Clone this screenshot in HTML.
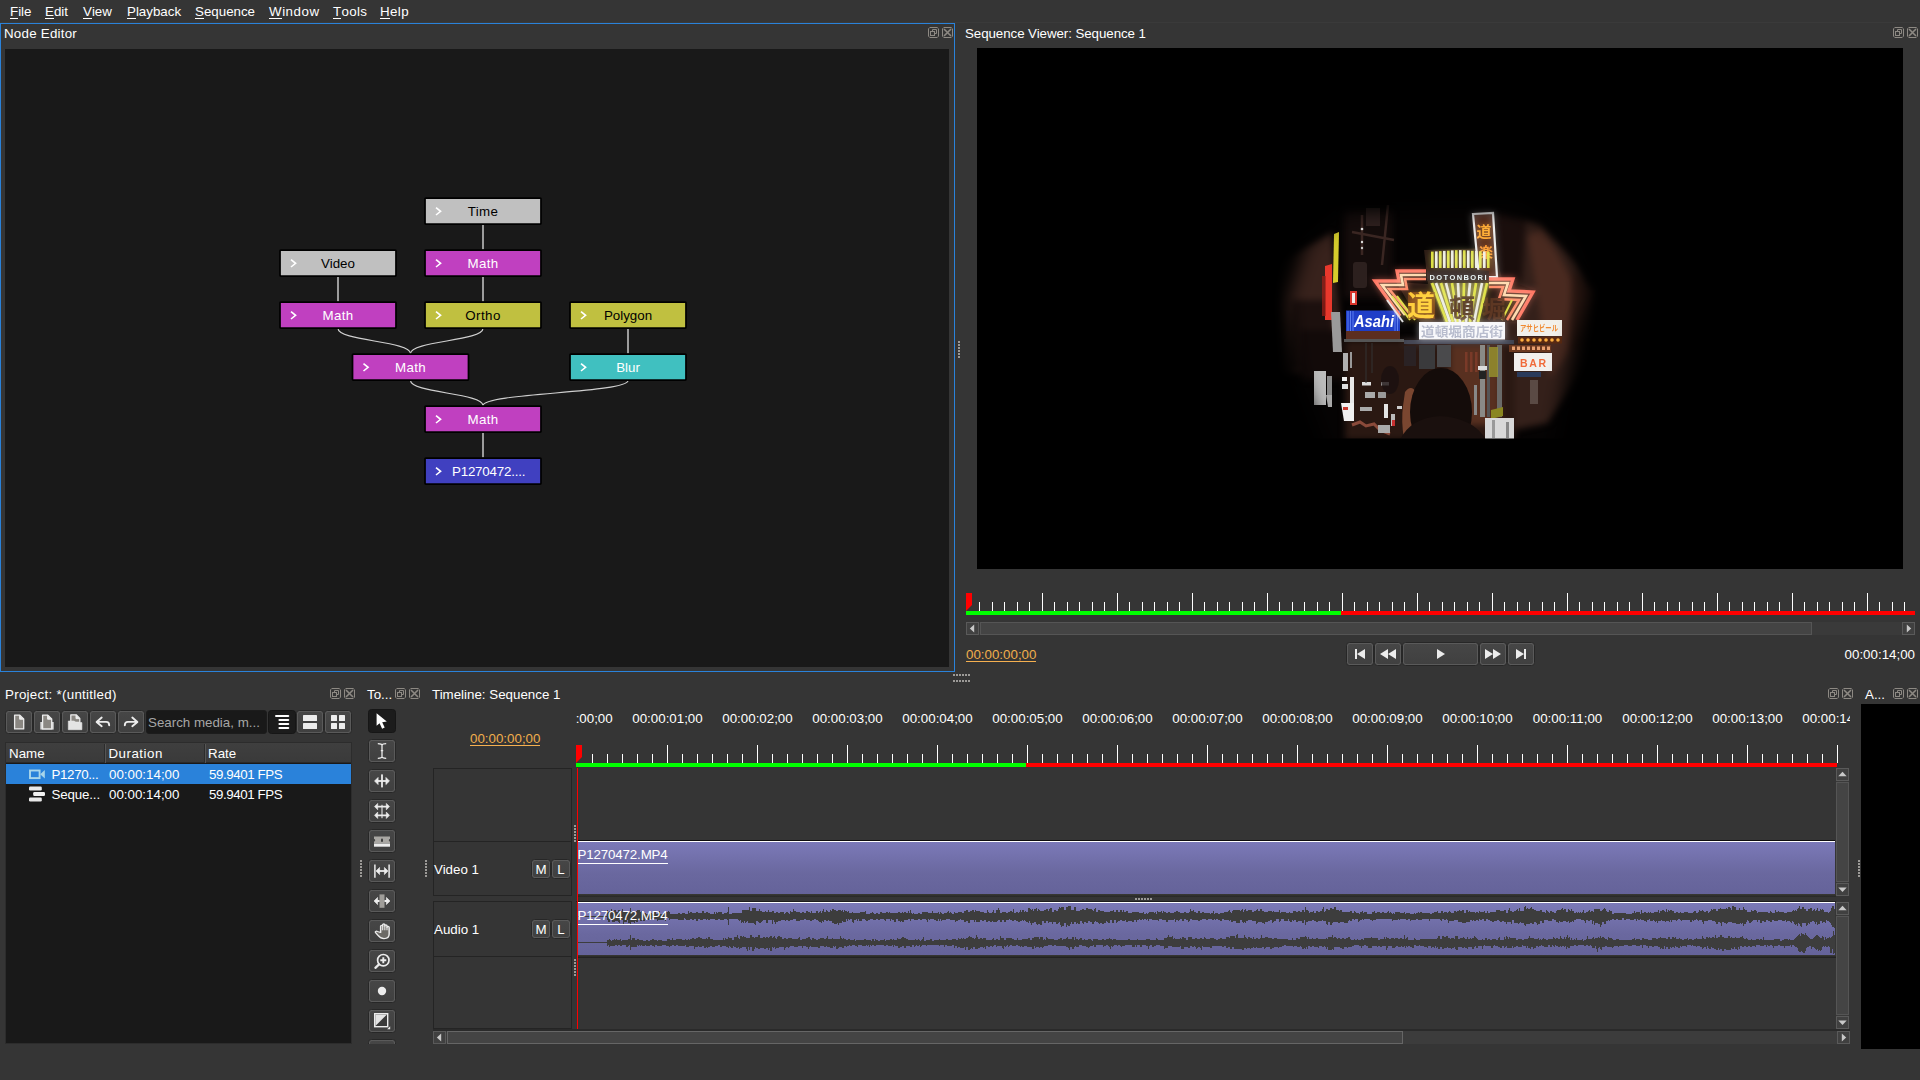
<!DOCTYPE html><html><head><meta charset="utf-8"><title>Olive</title><style>
*{box-sizing:border-box;margin:0;padding:0}
html,body{width:1920px;height:1080px;overflow:hidden;background:#353535}
body{font-family:"Liberation Sans","DejaVu Sans",sans-serif;font-size:13.33px;color:#fff;position:relative;line-height:16px}
.a{position:absolute}
.t{position:absolute;white-space:nowrap;line-height:16px;height:16px}
.dk{position:absolute;background:#191919}
.btn{position:absolute;border:1px solid #272727;border-radius:3.5px;background:#5a5a5a;padding:1px}
.btn>i{display:block;width:100%;height:100%;border-radius:2px;background:linear-gradient(#464646,#404040)}
.btn.on{background:#1c1c1c;border-color:#161616}
.btn.on>i{background:#1c1c1c}
.btn svg{position:absolute;left:50%;top:50%}
.tc{color:#f0ae4c;border-bottom:1px solid #f5b050}
u{text-decoration:none;border-bottom:1px solid #fff;display:inline-block;line-height:14px;height:14px}
.di{position:absolute;width:11px;height:11px}
svg{display:block;overflow:visible}
.sb{position:absolute;background:#3e3e3e;border:1px solid #555}
.sbb{position:absolute;background:#404040;border:1px solid #5a5a5a}
</style></head><body><div class="t " style="left:10px;top:3.5px;"><u>F</u>ile</div><div class="t " style="left:45px;top:3.5px;"><u>E</u>dit</div><div class="t " style="left:83px;top:3.5px;"><u>V</u>iew</div><div class="t " style="left:127px;top:3.5px;"><u>P</u>layback</div><div class="t " style="left:195px;top:3.5px;"><u>S</u>equence</div><div class="t " style="left:269px;top:3.5px;"><span style="letter-spacing:0.53px"><u>W</u>indow</span></div><div class="t " style="left:333px;top:3.5px;"><span style="letter-spacing:0.3px"><u>T</u>ools</span></div><div class="t " style="left:380px;top:3.5px;"><span style="letter-spacing:0.4px"><u>H</u>elp</span></div><div class="a" style="left:0;top:22px;width:1920px;height:1px;background:#3a3a3a"></div><div class="a" style="left:0;top:23px;width:955px;height:649px;border:1px solid #2a82da"></div><div class="t " style="left:4px;top:25.5px;;letter-spacing:0.24px">Node Editor</div><svg class="di" style="left:928px;top:27px" viewBox="0 0 11 11"><path d="M1.8 .5h7.4l1.3 1.3v7.4l-1.3 1.3h-7.4l-1.300-1.300v-7.400z" fill="none" stroke="#8d8983" stroke-width="1"/><path d="M4.5 4.5v-2h4v4h-2" fill="none" stroke="#8d8983"/><rect x="2.5" y="4.5" width="4" height="4" fill="none" stroke="#8d8983"/></svg><svg class="di" style="left:942px;top:27px" viewBox="0 0 11 11"><path d="M1.8 .5h7.4l1.3 1.3v7.4l-1.3 1.3h-7.4l-1.300-1.300v-7.400z" fill="none" stroke="#8d8983" stroke-width="1"/><path d="M2 2l7 7M9 2l-7 7" stroke="#8d8983" stroke-width="1.6"/></svg><div class="dk" style="left:5px;top:49px;width:944px;height:618px"></div><svg class="a" style="left:0;top:0" width="960" height="680" viewBox="0 0 960 680"><rect x="482" y="224.5" width="2" height="25" fill="#9c9c9c"/><rect x="337" y="276.5" width="2" height="25" fill="#9c9c9c"/><rect x="482" y="276.5" width="2" height="25" fill="#9c9c9c"/><rect x="627" y="328.5" width="2" height="25" fill="#9c9c9c"/><rect x="482" y="432.5" width="2" height="25" fill="#9c9c9c"/><path d="M338 328.5C338 341.0 410.5 341.0 410.5 353.5" fill="none" stroke="#cfcfcf" stroke-width="1.15"/><path d="M483 328.5C483 341.0 410.5 341.0 410.5 353.5" fill="none" stroke="#cfcfcf" stroke-width="1.15"/><path d="M410.5 380.5C410.5 393.0 483 393.0 483 405.5" fill="none" stroke="#cfcfcf" stroke-width="1.15"/><path d="M628 380.5C628 393.0 483 393.0 483 405.5" fill="none" stroke="#cfcfcf" stroke-width="1.15"/><rect x="425" y="198" width="116" height="26" rx=".8" fill="#c0c0c0" stroke="#000" stroke-width="1.75" stroke-linejoin="round"/><path d="M436 207.6l4.6 3.7-4.6 3.7" fill="none" stroke="#fff" stroke-width="1.6"/><text x="483" y="215.8" fill="#000" font-size="13.33" text-anchor="middle" letter-spacing="0.3">Time</text><rect x="280" y="250" width="116" height="26" rx=".8" fill="#c0c0c0" stroke="#000" stroke-width="1.75" stroke-linejoin="round"/><path d="M291 259.6l4.6 3.7-4.6 3.7" fill="none" stroke="#fff" stroke-width="1.6"/><text x="338" y="267.8" fill="#000" font-size="13.33" text-anchor="middle">Video</text><rect x="425" y="250" width="116" height="26" rx=".8" fill="#c040c0" stroke="#000" stroke-width="1.75" stroke-linejoin="round"/><path d="M436 259.6l4.6 3.7-4.6 3.7" fill="none" stroke="#fff" stroke-width="1.6"/><text x="483" y="267.8" fill="#fff" font-size="13.33" text-anchor="middle" letter-spacing="0.4">Math</text><rect x="280" y="302" width="116" height="26" rx=".8" fill="#c040c0" stroke="#000" stroke-width="1.75" stroke-linejoin="round"/><path d="M291 311.6l4.6 3.7-4.6 3.7" fill="none" stroke="#fff" stroke-width="1.6"/><text x="338" y="319.8" fill="#fff" font-size="13.33" text-anchor="middle" letter-spacing="0.4">Math</text><rect x="425" y="302" width="116" height="26" rx=".8" fill="#c0c040" stroke="#000" stroke-width="1.75" stroke-linejoin="round"/><path d="M436 311.6l4.6 3.7-4.6 3.7" fill="none" stroke="#fff" stroke-width="1.6"/><text x="483" y="319.8" fill="#000" font-size="13.33" text-anchor="middle" letter-spacing="0.45">Ortho</text><rect x="570" y="302" width="116" height="26" rx=".8" fill="#c0c040" stroke="#000" stroke-width="1.75" stroke-linejoin="round"/><path d="M581 311.6l4.6 3.7-4.6 3.7" fill="none" stroke="#fff" stroke-width="1.6"/><text x="628" y="319.8" fill="#000" font-size="13.33" text-anchor="middle">Polygon</text><rect x="352.5" y="354" width="116" height="26" rx=".8" fill="#c040c0" stroke="#000" stroke-width="1.75" stroke-linejoin="round"/><path d="M363.5 363.6l4.6 3.7-4.6 3.7" fill="none" stroke="#fff" stroke-width="1.6"/><text x="410.5" y="371.8" fill="#fff" font-size="13.33" text-anchor="middle" letter-spacing="0.4">Math</text><rect x="570" y="354" width="116" height="26" rx=".8" fill="#40c0c0" stroke="#000" stroke-width="1.75" stroke-linejoin="round"/><path d="M581 363.6l4.6 3.7-4.6 3.7" fill="none" stroke="#fff" stroke-width="1.6"/><text x="628" y="371.8" fill="#fff" font-size="13.33" text-anchor="middle">Blur</text><rect x="425" y="406" width="116" height="26" rx=".8" fill="#c040c0" stroke="#000" stroke-width="1.75" stroke-linejoin="round"/><path d="M436 415.6l4.6 3.7-4.6 3.7" fill="none" stroke="#fff" stroke-width="1.6"/><text x="483" y="423.8" fill="#fff" font-size="13.33" text-anchor="middle" letter-spacing="0.4">Math</text><rect x="425" y="458" width="116" height="26" rx=".8" fill="#4040c0" stroke="#000" stroke-width="1.75" stroke-linejoin="round"/><path d="M436 467.6l4.6 3.7-4.6 3.7" fill="none" stroke="#fff" stroke-width="1.6"/><text x="452" y="475.8" fill="#fff" font-size="13.33" letter-spacing="-0.2">P1270472....</text></svg><div class="t " style="left:965px;top:25.5px;;letter-spacing:-0.07px">Sequence Viewer: Sequence 1</div><svg class="di" style="left:1893px;top:27px" viewBox="0 0 11 11"><path d="M1.8 .5h7.4l1.3 1.3v7.4l-1.3 1.3h-7.4l-1.300-1.300v-7.400z" fill="none" stroke="#8d8983" stroke-width="1"/><path d="M4.5 4.5v-2h4v4h-2" fill="none" stroke="#8d8983"/><rect x="2.5" y="4.5" width="4" height="4" fill="none" stroke="#8d8983"/></svg><svg class="di" style="left:1907px;top:27px" viewBox="0 0 11 11"><path d="M1.8 .5h7.4l1.3 1.3v7.4l-1.3 1.3h-7.4l-1.300-1.300v-7.400z" fill="none" stroke="#8d8983" stroke-width="1"/><path d="M2 2l7 7M9 2l-7 7" stroke="#8d8983" stroke-width="1.6"/></svg><div class="a" style="left:977px;top:48px;width:926px;height:521px;background:#000;overflow:hidden"><svg class="a" style="left:0;top:0" width="926" height="521" viewBox="977 48 926 521" font-family="Liberation Sans,Noto Sans CJK JP,sans-serif"><defs><filter id="mb" color-interpolation-filters="sRGB" x="-20%" y="-20%" width="140%" height="140%"><feGaussianBlur stdDeviation="9"/></filter><filter id="b1" color-interpolation-filters="sRGB" x="-10%" y="-10%" width="120%" height="120%"><feGaussianBlur stdDeviation=".55"/></filter><filter id="b3" color-interpolation-filters="sRGB" x="-30%" y="-30%" width="160%" height="160%"><feGaussianBlur stdDeviation="3"/></filter><filter id="b6" color-interpolation-filters="sRGB" x="-30%" y="-30%" width="160%" height="160%"><feGaussianBlur stdDeviation="6"/></filter><mask id="vm" maskUnits="userSpaceOnUse" x="1200" y="150" width="480" height="300"><g filter="url(#mb)"><path d="M1345 212L1515 208L1570 240L1588 292L1572 350L1550 460L1332 460L1298 372L1288 300L1306 245Z" fill="#fff"/></g><rect x="1200" y="438.5" width="480" height="40" fill="#000"/></mask><clipPath id="vc"><rect x="1200" y="150" width="480" height="288.5"/></clipPath></defs><g mask="url(#vm)"><g filter="url(#b1)"><rect x="1240" y="170" width="400" height="270" fill="#050303"/><g filter="url(#b3)"><path d="M1278 262l54-30 8 90-20 50-44 2z" fill="#38221c"/><path d="M1292 300h40v70h-44z" fill="#1c100e"/><path d="M1344 210h48v88h-48z" fill="#140c0b"/><path d="M1500 215l40 8 36 40 18 30-6 70-40 60-50 10z" fill="#34201a"/><path d="M1528 236l14-8 30 50 8 60-30 40z" fill="#4a2a20"/><path d="M1572 270l24 20-4 50-22 14z" fill="#2c1812"/><path d="M1496 212l30 10-4 60-26 0z" fill="#1a0e0c"/><path d="M1345 340h170v100h-170z" fill="#2a1812"/><path d="M1450 345h50v80h-50z" fill="#583020"/><path d="M1300 330h46v50h-46z" fill="#120a09"/></g><path d="M1325 266l7-2 0 56-7 0z" fill="#e8382c"/><path d="M1322 276h4v40h-4z" fill="#a02018" opacity=".7"/><path d="M1334 234l5-2-1 50-5 1z" fill="#d6cc2c"/><path d="M1331 312h9l2 40h-9z" fill="#9a9a9a"/><rect x="1350" y="291" width="7" height="14" fill="#d8352c"/><rect x="1352" y="293" width="3" height="10" fill="#f4eeee"/><g stroke="#3a2622" stroke-width="2.5" fill="none"><path d="M1388 205l-6 60M1352 232l42 8M1362 215v40"/></g><rect x="1366" y="208" width="14" height="18" fill="#2e201e"/><rect x="1353" y="262" width="14" height="26" rx="3" fill="#2c201e"/><circle cx="1362" cy="229" r="1.300" fill="#ddd"/><circle cx="1362" cy="242" r="1.200" fill="#ddd"/><circle cx="1362" cy="248" r="1.200" fill="#ccc"/><rect x="1346" y="310.500" width="54" height="20.500" fill="#1f3ec8"/><path d="M1348 311v20M1350.500 311v20M1353 311v20M1397.500 311v20M1395 311v20" stroke="#5a7cf0" stroke-width="1"/><text x="1354" y="327" font-size="16" font-weight="bold" font-style="italic" fill="#fff" textLength="40" lengthAdjust="spacingAndGlyphs">Asahi</text><rect x="1346" y="331" width="54" height="8" fill="#5c2e20"/><rect x="1344" y="339" width="60" height="3" fill="#555"/><path d="M1424 250l70-2 8 30 32 12-18 32h-96l-24-40 32 2z" fill="#2a1a14"/><path d="M1473 214l20-1 4 64-18 0z" fill="#3a1c12" stroke="#e8e8e8" stroke-width="2.200"/><text x="1476.500" y="237" font-size="15" font-weight="bold" fill="#ff9a28">道</text><text x="1479" y="257" font-size="14" font-weight="bold" fill="#ff8a28">楽</text><rect x="1431" y="251.6" width="2.600" height="16.4" fill="#d4d832"/><rect x="1435" y="251.4" width="2.600" height="16.6" fill="#e8e8e0"/><rect x="1439" y="251.1" width="2.600" height="16.9" fill="#d4d832"/><rect x="1443" y="250.9" width="2.600" height="17.1" fill="#e8e8e0"/><rect x="1447" y="250.7" width="2.600" height="17.3" fill="#d4d832"/><rect x="1451" y="250.4" width="2.600" height="17.6" fill="#e8e8e0"/><rect x="1455" y="250.2" width="2.600" height="17.8" fill="#d4d832"/><rect x="1459" y="250.1" width="2.600" height="17.9" fill="#e8e8e0"/><rect x="1463" y="250.3" width="2.600" height="17.7" fill="#d4d832"/><rect x="1467" y="250.5" width="2.600" height="17.5" fill="#e8e8e0"/><rect x="1471" y="250.8" width="2.600" height="17.2" fill="#d4d832"/><rect x="1475" y="251.0" width="2.600" height="17.0" fill="#e8e8e0"/><rect x="1479" y="251.3" width="2.600" height="16.7" fill="#d4d832"/><rect x="1483" y="251.5" width="2.600" height="16.5" fill="#e8e8e0"/><rect x="1487" y="251.7" width="2.600" height="16.3" fill="#d4d832"/><path d="M1427 271q31-5 62 0v10q-31-4-62 0z" fill="#241a18"/><text x="1429.500" y="279.500" font-size="7.500" font-weight="bold" fill="#e6f4f4" textLength="57" lengthAdjust="spacing">DOTONBORI</text><path d="M1430 283h60l-12 39h-34z" fill="#8a8640" opacity=".55"/><path d="M1432 283L1447 322" stroke="#d4d832" stroke-width="2.700"/><path d="M1436 283L1450 322" stroke="#e4e4dc" stroke-width="2.700"/><path d="M1441 283L1453 322" stroke="#d4d832" stroke-width="2.700"/><path d="M1446 283L1456 322" stroke="#e4e4dc" stroke-width="2.700"/><path d="M1452 283L1458 322" stroke="#d4d832" stroke-width="2.700"/><path d="M1458 283L1460 322" stroke="#e4e4dc" stroke-width="2.700"/><path d="M1464 283L1463 322" stroke="#d4d832" stroke-width="2.700"/><path d="M1470 283L1466 322" stroke="#e4e4dc" stroke-width="2.700"/><path d="M1476 283L1470 322" stroke="#d4d832" stroke-width="2.700"/><path d="M1482 283L1474 322" stroke="#e4e4dc" stroke-width="2.700"/><path d="M1487 283L1478 322" stroke="#d4d832" stroke-width="2.700"/><path d="M1400 316 L1375 281 L1399 281 L1397 271 L1426 271" fill="none" stroke="#ff6a58" stroke-width="3.4" stroke-linejoin="miter"/><path d="M1405 315 L1382 285 L1403 285 L1401 275 L1426 275" fill="none" stroke="#ffd0a0" stroke-width="2.6" stroke-linejoin="miter"/><path d="M1410 314 L1389 289 L1407 289 L1405 279 L1426 279" fill="none" stroke="#ff7a5a" stroke-width="2.6" stroke-linejoin="miter"/><path d="M1489 279 L1513 279 L1509 291 L1533 292 L1517 320" fill="none" stroke="#ff6a58" stroke-width="3.4" stroke-linejoin="miter"/><path d="M1489 283 L1508 283 L1504 295 L1526 296 L1512 320" fill="none" stroke="#ffd0a0" stroke-width="2.6" stroke-linejoin="miter"/><path d="M1489 287 L1503 287 L1499 299 L1519 300 L1507 320" fill="none" stroke="#ff7a5a" stroke-width="2.6" stroke-linejoin="miter"/><path d="M1392 296l18 24M1397 296l18 24" stroke="#d6d63a" stroke-width="2"/><path d="M1387 300l16 22" stroke="#ddd" stroke-width="2"/><path d="M1512 300l-10 20" stroke="#d6d63a" stroke-width="2"/><rect x="1408" y="292" width="27" height="27" fill="#7a3a14" opacity=".7"/><text x="1407" y="316" font-size="28" font-weight="bold" fill="#ffc030">道</text><text x="1449" y="318" font-size="26" font-weight="bold" fill="#3a2016">頓</text><text x="1482" y="318" font-size="24" font-weight="bold" fill="#4a2a1a">堀</text><rect x="1419" y="322" width="86" height="17.500" fill="#f4f4f8"/><text x="1421" y="336" font-size="13" font-weight="bold" fill="#8a90a8" textLength="82" lengthAdjust="spacingAndGlyphs">道頓堀商店街</text><rect x="1404" y="340" width="110" height="4" fill="#3a3c48"/><g filter="url(#b3)" opacity=".55" style="mix-blend-mode:screen"><path d="M1473 214l20-1 4 64-18 0z" fill="#3a1c12" stroke="#e8e8e8" stroke-width="2.200"/><text x="1476.500" y="237" font-size="15" font-weight="bold" fill="#ff9a28">道</text><text x="1479" y="257" font-size="14" font-weight="bold" fill="#ff8a28">楽</text><rect x="1431" y="251.6" width="2.600" height="16.4" fill="#d4d832"/><rect x="1435" y="251.4" width="2.600" height="16.6" fill="#e8e8e0"/><rect x="1439" y="251.1" width="2.600" height="16.9" fill="#d4d832"/><rect x="1443" y="250.9" width="2.600" height="17.1" fill="#e8e8e0"/><rect x="1447" y="250.7" width="2.600" height="17.3" fill="#d4d832"/><rect x="1451" y="250.4" width="2.600" height="17.6" fill="#e8e8e0"/><rect x="1455" y="250.2" width="2.600" height="17.8" fill="#d4d832"/><rect x="1459" y="250.1" width="2.600" height="17.9" fill="#e8e8e0"/><rect x="1463" y="250.3" width="2.600" height="17.7" fill="#d4d832"/><rect x="1467" y="250.5" width="2.600" height="17.5" fill="#e8e8e0"/><rect x="1471" y="250.8" width="2.600" height="17.2" fill="#d4d832"/><rect x="1475" y="251.0" width="2.600" height="17.0" fill="#e8e8e0"/><rect x="1479" y="251.3" width="2.600" height="16.7" fill="#d4d832"/><rect x="1483" y="251.5" width="2.600" height="16.5" fill="#e8e8e0"/><rect x="1487" y="251.7" width="2.600" height="16.3" fill="#d4d832"/><path d="M1427 271q31-5 62 0v10q-31-4-62 0z" fill="#241a18"/><text x="1429.500" y="279.500" font-size="7.500" font-weight="bold" fill="#e6f4f4" textLength="57" lengthAdjust="spacing">DOTONBORI</text><path d="M1430 283h60l-12 39h-34z" fill="#8a8640" opacity=".55"/><path d="M1432 283L1447 322" stroke="#d4d832" stroke-width="2.700"/><path d="M1436 283L1450 322" stroke="#e4e4dc" stroke-width="2.700"/><path d="M1441 283L1453 322" stroke="#d4d832" stroke-width="2.700"/><path d="M1446 283L1456 322" stroke="#e4e4dc" stroke-width="2.700"/><path d="M1452 283L1458 322" stroke="#d4d832" stroke-width="2.700"/><path d="M1458 283L1460 322" stroke="#e4e4dc" stroke-width="2.700"/><path d="M1464 283L1463 322" stroke="#d4d832" stroke-width="2.700"/><path d="M1470 283L1466 322" stroke="#e4e4dc" stroke-width="2.700"/><path d="M1476 283L1470 322" stroke="#d4d832" stroke-width="2.700"/><path d="M1482 283L1474 322" stroke="#e4e4dc" stroke-width="2.700"/><path d="M1487 283L1478 322" stroke="#d4d832" stroke-width="2.700"/><path d="M1400 316 L1375 281 L1399 281 L1397 271 L1426 271" fill="none" stroke="#ff6a58" stroke-width="3.4" stroke-linejoin="miter"/><path d="M1405 315 L1382 285 L1403 285 L1401 275 L1426 275" fill="none" stroke="#ffd0a0" stroke-width="2.6" stroke-linejoin="miter"/><path d="M1410 314 L1389 289 L1407 289 L1405 279 L1426 279" fill="none" stroke="#ff7a5a" stroke-width="2.6" stroke-linejoin="miter"/><path d="M1489 279 L1513 279 L1509 291 L1533 292 L1517 320" fill="none" stroke="#ff6a58" stroke-width="3.4" stroke-linejoin="miter"/><path d="M1489 283 L1508 283 L1504 295 L1526 296 L1512 320" fill="none" stroke="#ffd0a0" stroke-width="2.6" stroke-linejoin="miter"/><path d="M1489 287 L1503 287 L1499 299 L1519 300 L1507 320" fill="none" stroke="#ff7a5a" stroke-width="2.6" stroke-linejoin="miter"/><path d="M1392 296l18 24M1397 296l18 24" stroke="#d6d63a" stroke-width="2"/><path d="M1387 300l16 22" stroke="#ddd" stroke-width="2"/><path d="M1512 300l-10 20" stroke="#d6d63a" stroke-width="2"/><rect x="1408" y="292" width="27" height="27" fill="#7a3a14" opacity=".7"/><text x="1407" y="316" font-size="28" font-weight="bold" fill="#ffc030">道</text><text x="1449" y="318" font-size="26" font-weight="bold" fill="#3a2016">頓</text><text x="1482" y="318" font-size="24" font-weight="bold" fill="#4a2a1a">堀</text><rect x="1419" y="322" width="86" height="17.500" fill="#f4f4f8"/><text x="1421" y="336" font-size="13" font-weight="bold" fill="#8a90a8" textLength="82" lengthAdjust="spacingAndGlyphs">道頓堀商店街</text><rect x="1404" y="340" width="110" height="4" fill="#3a3c48"/></g><rect x="1517" y="320" width="45" height="16" fill="#f2f0ea"/><text x="1520" y="331" font-size="8" font-weight="bold" fill="#f08a30" textLength="38" lengthAdjust="spacingAndGlyphs">アサヒビール</text><rect x="1518" y="337" width="44" height="6.500" fill="#5a2a12"/><circle cx="1522" cy="340" r="1.800" fill="#ffb040"/><circle cx="1528" cy="340" r="1.800" fill="#ffb040"/><circle cx="1534" cy="340" r="1.800" fill="#ffb040"/><circle cx="1540" cy="340" r="1.800" fill="#ffb040"/><circle cx="1546" cy="340" r="1.800" fill="#ffb040"/><circle cx="1552" cy="340" r="1.800" fill="#ffb040"/><circle cx="1558" cy="340" r="1.800" fill="#ffb040"/><rect x="1509" y="345" width="42" height="7" fill="#6a3820"/><rect x="1512" y="346.500" width="3" height="3.500" fill="#e8a070"/><rect x="1517" y="346.500" width="3" height="3.500" fill="#e8a070"/><rect x="1522" y="346.500" width="3" height="3.500" fill="#e8a070"/><rect x="1527" y="346.500" width="3" height="3.500" fill="#e8a070"/><rect x="1532" y="346.500" width="3" height="3.500" fill="#e8a070"/><rect x="1537" y="346.500" width="3" height="3.500" fill="#e8a070"/><rect x="1542" y="346.500" width="3" height="3.500" fill="#e8a070"/><rect x="1547" y="346.500" width="3" height="3.500" fill="#e8a070"/><rect x="1514" y="353" width="38" height="18" fill="#f2f0ee"/><text x="1520" y="366.500" font-size="10.500" font-weight="bold" fill="#f06a3a" textLength="26" lengthAdjust="spacing">BAR</text><rect x="1517" y="372" width="24" height="5" fill="#2a3a5a"/><rect x="1530" y="380" width="8" height="24" fill="#5a4a44"/><rect x="1480" y="345" width="5" height="72" fill="#8a8a86"/><rect x="1487" y="345" width="3" height="72" fill="#555"/><rect x="1497" y="345" width="5" height="72" fill="#6a6a68"/><rect x="1489" y="347" width="9" height="30" fill="#9a9630" opacity=".8"/><path d="M1491 410l12-3v9l-12 3z" fill="#8a8620"/><rect x="1485" y="418" width="29" height="21" fill="#d8d8d8"/><rect x="1492" y="420" width="3" height="18" fill="#999"/><rect x="1506" y="422" width="3" height="16" fill="#888"/><rect x="1478" y="366" width="9" height="4" fill="#ddd"/><rect x="1479" y="371" width="7" height="8" fill="#222"/><rect x="1465" y="352" width="2.500" height="20" fill="#7a3a28"/><rect x="1470" y="352" width="2.500" height="20" fill="#7a3a28"/><rect x="1475" y="352" width="2.500" height="20" fill="#7a3a28"/><rect x="1474" y="385" width="3" height="30" fill="#888"/><rect x="1314" y="371" width="12" height="34" fill="#bcbcbc"/><rect x="1327" y="376" width="5" height="20" fill="#8a8a8a"/><path d="M1326 395l6 0 0 12-4 0z" fill="#aaa"/><rect x="1343" y="353" width="5" height="18" fill="#b0b0b0"/><rect x="1350" y="352" width="2" height="16" fill="#999"/><rect x="1342" y="377" width="5" height="4" fill="#eee"/><rect x="1342" y="384" width="6" height="5" fill="#ddd"/><rect x="1350" y="377" width="4" height="44" fill="#e8e8e8"/><path d="M1341 403h13v18h-10z" fill="#f0f0f0"/><rect x="1343" y="407" width="5" height="3" fill="#c83a30"/><rect x="1362" y="382" width="9" height="3.500" fill="#ddd"/><rect x="1381" y="382" width="8" height="3.500" fill="#ccc"/><rect x="1365" y="392" width="10" height="6" fill="#aaa"/><rect x="1378" y="392" width="8" height="6" fill="#999"/><rect x="1360" y="407" width="12" height="4" fill="#aaa"/><rect x="1384" y="404" width="4" height="14" fill="#e4e4e4"/><rect x="1391" y="414" width="4" height="12" fill="#bbb"/><rect x="1397" y="406" width="5" height="3" fill="#ccc"/><path d="M1352 425l8-3 6 4 8-2 6 6 10 4" stroke="#8a4a3a" stroke-width="3" fill="none"/><rect x="1378" y="425" width="12" height="8" fill="#aaa"/><rect x="1392" y="420" width="3" height="6" fill="#c83030"/><path d="M1366 343v40M1372 343v30" stroke="#333" stroke-width="1"/><rect x="1419" y="345" width="16" height="24" fill="#3a3a3c"/><rect x="1437" y="345" width="14" height="22" fill="#4a4a4c"/><rect x="1404" y="346" width="12" height="20" fill="#2a2224"/><g filter="url(#b1)"><path d="M1405 392q6-8 11 0l2 20q2 12-2 28h-12q-3-20-1-34z" fill="#7a4630"/><ellipse cx="1441" cy="412" rx="31" ry="44" fill="#140c0a"/><path d="M1400 440q10-22 40-24 34 2 46 24z" fill="#1a100e"/><ellipse cx="1390" cy="380" rx="9" ry="14" fill="#1a1010" opacity=".8"/></g></g></g></svg></div><svg class="a" style="left:0;top:0" width="1920" height="640" viewBox="0 0 1920 640" shape-rendering="crispEdges"><path d="M979.5 602V611M992.5 602V611M1004.5 602V611M1017.5 602V611M1029.5 602V611M1042.5 593V611M1054.5 602V611M1067.5 602V611M1079.5 602V611M1092.5 602V611M1104.5 602V611M1117.5 593V611M1129.5 602V611M1142.5 602V611M1154.5 602V611M1167.5 602V611M1179.5 602V611M1192.5 593V611M1204.5 602V611M1217.5 602V611M1229.5 602V611M1242.5 602V611M1254.5 602V611M1267.5 593V611M1279.5 602V611M1292.5 602V611M1304.5 602V611M1317.5 602V611M1329.5 602V611M1342.5 593V611M1354.5 602V611M1367.5 602V611M1379.5 602V611M1392.5 602V611M1404.5 602V611M1417.5 593V611M1429.5 602V611M1442.5 602V611M1454.5 602V611M1467.5 602V611M1479.5 602V611M1492.5 593V611M1504.5 602V611M1517.5 602V611M1529.5 602V611M1542.5 602V611M1554.5 602V611M1567.5 593V611M1579.5 602V611M1592.5 602V611M1604.5 602V611M1617.5 602V611M1629.5 602V611M1642.5 593V611M1654.5 602V611M1667.5 602V611M1679.5 602V611M1692.5 602V611M1704.5 602V611M1717.5 593V611M1729.5 602V611M1742.5 602V611M1754.5 602V611M1767.5 602V611M1779.5 602V611M1792.5 593V611M1804.5 602V611M1817.5 602V611M1829.5 602V611M1842.5 602V611M1854.5 602V611M1867.5 593V611M1879.5 602V611M1892.5 602V611M1904.5 602V611" stroke="#fff" stroke-width="1" fill="none"/><rect x="966" y="611" width="375" height="4" fill="#00ff00"/><rect x="1341" y="611" width="574" height="4" fill="#ff0000"/></svg><svg class="a" style="left:0;top:0" width="1920" height="640" viewBox="0 0 1920 640"><path d="M966 593h6v12l-6 6z" fill="#ff0000"/></svg><div class="a" style="left:979px;top:622px;width:923px;height:13px;background:#3a3a3a"></div><div class="sbb" style="left:966px;top:622px;width:13px;height:13px"></div><div class="sbb" style="left:1902px;top:622px;width:13px;height:13px"></div><div class="sb" style="left:980px;top:622px;width:832px;height:13px;background:#444"></div><svg class="a" style="left:966px;top:622px" width="13" height="13"><path d="M8.200 2.500v8l-4.400-4z" fill="#c8c8c8"/></svg><svg class="a" style="left:1902px;top:622px" width="13" height="13"><path d="M4.800 2.500v8l4.400-4z" fill="#c8c8c8"/></svg><div class="t" style="left:966px;top:646.5px;height:15px;line-height:16px"><span class="tc" style="display:inline-block;height:15px">00:00:00;00</span></div><div class="t" style="right:5px;top:646.5px;">00:00:14;00</div><div class="btn" style="left:1346px;top:642px;width:28px;height:24px"><i></i><svg width="20" height="12" viewBox="0 0 20 12" style="margin:-6px 0 0 -10px"><path d="M5 1h2v10h-2zM7 6l8-5v10z" fill="#ececec"/></svg></div><div class="btn" style="left:1374px;top:642px;width:28px;height:24px"><i></i><svg width="20" height="12" viewBox="0 0 20 12" style="margin:-6px 0 0 -10px"><path d="M2 6l8-5v10zM10 6l8-5v10z" fill="#ececec"/></svg></div><div class="btn" style="left:1402px;top:642px;width:77px;height:24px"><i></i><svg width="20" height="12" viewBox="0 0 20 12" style="margin:-6px 0 0 -10px"><path d="M6 1l8 5-8 5z" fill="#ececec"/></svg></div><div class="btn" style="left:1479px;top:642px;width:28px;height:24px"><i></i><svg width="20" height="12" viewBox="0 0 20 12" style="margin:-6px 0 0 -10px"><path d="M2 1l8 5-8 5zM10 1l8 5-8 5z" fill="#ececec"/></svg></div><div class="btn" style="left:1507px;top:642px;width:28px;height:24px"><i></i><svg width="20" height="12" viewBox="0 0 20 12" style="margin:-6px 0 0 -10px"><path d="M5 1l8 5-8 5zM13 1h2v10h-2z" fill="#ececec"/></svg></div><svg class="a" style="left:953px;top:674px" width="18" height="2" shape-rendering="crispEdges"><rect y="0" x="0" width="2" height="2" fill="#9c9a97"/><rect y="0" x="3" width="2" height="2" fill="#9c9a97"/><rect y="0" x="6" width="2" height="2" fill="#9c9a97"/><rect y="0" x="9" width="2" height="2" fill="#9c9a97"/><rect y="0" x="12" width="2" height="2" fill="#9c9a97"/><rect y="0" x="15" width="2" height="2" fill="#9c9a97"/></svg><svg class="a" style="left:953px;top:680px" width="18" height="2" shape-rendering="crispEdges"><rect y="0" x="0" width="2" height="2" fill="#9c9a97"/><rect y="0" x="3" width="2" height="2" fill="#9c9a97"/><rect y="0" x="6" width="2" height="2" fill="#9c9a97"/><rect y="0" x="9" width="2" height="2" fill="#9c9a97"/><rect y="0" x="12" width="2" height="2" fill="#9c9a97"/><rect y="0" x="15" width="2" height="2" fill="#9c9a97"/></svg><svg class="a" style="left:958px;top:341px" width="2" height="18" shape-rendering="crispEdges"><rect x="0" y="0" width="2" height="2" fill="#9c9a97"/><rect x="0" y="3" width="2" height="2" fill="#9c9a97"/><rect x="0" y="6" width="2" height="2" fill="#9c9a97"/><rect x="0" y="9" width="2" height="2" fill="#9c9a97"/><rect x="0" y="12" width="2" height="2" fill="#9c9a97"/><rect x="0" y="15" width="2" height="2" fill="#9c9a97"/></svg><div class="t " style="left:5px;top:686.5px;;letter-spacing:0.29px">Project: *(untitled)</div><svg class="di" style="left:330px;top:688px" viewBox="0 0 11 11"><path d="M1.8 .5h7.4l1.3 1.3v7.4l-1.3 1.3h-7.4l-1.300-1.300v-7.400z" fill="none" stroke="#8d8983" stroke-width="1"/><path d="M4.5 4.5v-2h4v4h-2" fill="none" stroke="#8d8983"/><rect x="2.5" y="4.5" width="4" height="4" fill="none" stroke="#8d8983"/></svg><svg class="di" style="left:344px;top:688px" viewBox="0 0 11 11"><path d="M1.8 .5h7.4l1.3 1.3v7.4l-1.3 1.3h-7.4l-1.300-1.300v-7.400z" fill="none" stroke="#8d8983" stroke-width="1"/><path d="M2 2l7 7M9 2l-7 7" stroke="#8d8983" stroke-width="1.6"/></svg><div class="btn" style="left:5px;top:710px;width:28px;height:24px"><i></i><svg width="16" height="16" viewBox="0 0 16 16" style="margin:-8.0px 0 0 -8.0px"><path d="M3.6 1.1h5.2l3.9 3.9v9.9h-9.1z" fill="#8a8782" stroke="#ececec" stroke-width="1.3" stroke-linejoin="round"/><path d="M8.6 1.2v4h4" fill="#ececec" stroke="#ececec" stroke-width="1" stroke-linejoin="round"/></svg></div><div class="btn" style="left:33px;top:710px;width:28px;height:24px"><i></i><svg width="16" height="16" viewBox="0 0 16 16" style="margin:-8.0px 0 0 -8.0px"><path d="M1.3 8h13.4v7.6h-13.4z" fill="#d8d8d8"/><path d="M3.6 1.1h5.2l3.9 3.9v9.9h-9.1z" fill="#8a8782" stroke="#ececec" stroke-width="1.3" stroke-linejoin="round"/><path d="M8.6 1.2v4h4" fill="#ececec" stroke="#ececec" stroke-width="1" stroke-linejoin="round"/></svg></div><div class="btn" style="left:61px;top:710px;width:28px;height:24px"><i></i><svg width="16" height="16" viewBox="0 0 16 16" style="margin:-8.0px 0 0 -8.0px"><path d="M3.8 .8h5.4l3.6 3.6v4h-9z" fill="#8a8782" stroke="#ececec" stroke-width="1.3" stroke-linejoin="round"/><path d="M9 1v3.6h3.6" fill="#ececec" stroke="#ececec" stroke-linejoin="round"/><path d="M1.3 7h6l1.6 1.6h6v7.1h-13.6z" fill="#e4e4e4" stroke="#e4e4e4" stroke-width=".6" stroke-linejoin="round"/></svg></div><div class="btn" style="left:89px;top:710px;width:28px;height:24px"><i></i><svg width="16" height="16" viewBox="0 0 16 16" style="margin:-8.0px 0 0 -8.0px"><path d="M6.7 3.6L1.6 7.9l5.1 4.3M1.8 7.9h9.4c2 0 3 1.4 3 3.3" fill="none" stroke="#ececec" stroke-width="1.9" stroke-linecap="round" stroke-linejoin="round"/></svg></div><div class="btn" style="left:117px;top:710px;width:28px;height:24px"><i></i><svg width="16" height="16" viewBox="0 0 16 16" style="margin:-8.0px 0 0 -8.0px"><path d="M9.3 3.6l5.1 4.3-5.1 4.3M14.2 7.9h-9.4c-2 0-3 1.4-3 3.3" fill="none" stroke="#ececec" stroke-width="1.9" stroke-linecap="round" stroke-linejoin="round"/></svg></div><div class="a" style="left:146px;top:710px;width:121px;height:24px;background:#191919;border-radius:3px;border:1px solid #1c1c1c"></div><div class="t" style="left:148px;top:715px;color:#a6a6a6;width:116px;overflow:hidden">Search media, m...</div><div class="btn on" style="left:268px;top:710px;width:28px;height:24px"><i></i><svg width="16" height="16" viewBox="0 0 16 16" style="margin:-8.0px 0 0 -8.0px"><rect x="1" y="0.9" width="14.3" height="2.2" rx="1.1" fill="#fff"/><rect x="4.4" y="4.9" width="10.9" height="2.2" rx="1.1" fill="#fff"/><rect x="4.4" y="8.9" width="10.9" height="2.2" rx="1.1" fill="#fff"/><rect x="4.4" y="12.9" width="10.9" height="2.2" rx="1.1" fill="#fff"/></svg></div><div class="btn" style="left:296px;top:710px;width:28px;height:24px"><i></i><svg width="16" height="16" viewBox="0 0 16 16" style="margin:-8.0px 0 0 -8.0px"><rect x="1" y="1" width="14" height="6" rx=".6" fill="#ececec"/><rect x="1" y="9" width="14" height="6" rx=".6" fill="#ececec"/></svg></div><div class="btn" style="left:324px;top:710px;width:28px;height:24px"><i></i><svg width="16" height="16" viewBox="0 0 16 16" style="margin:-8.0px 0 0 -8.0px"><rect x="1" y="1" width="6" height="6" rx=".5" fill="#ececec"/><rect x="9" y="1" width="6" height="6" rx=".5" fill="#ececec"/><rect x="1" y="9" width="6" height="6" rx=".5" fill="#ececec"/><rect x="9" y="9" width="6" height="6" rx=".5" fill="#ececec"/></svg></div><div class="a" style="left:5px;top:742px;width:347px;height:302px;background:#2c2c2c"></div><div class="dk" style="left:6px;top:743px;width:345px;height:300px"></div><div class="a" style="left:6px;top:743px;width:345px;height:20px;background:linear-gradient(#3f3f3f,#3a3a3a);border-bottom:1px solid #2a2a2a"></div><div class="a" style="left:104px;top:744px;width:1px;height:19px;background:#2c2c2c"></div><div class="a" style="left:105px;top:744px;width:1px;height:19px;background:#555"></div><div class="a" style="left:204px;top:744px;width:1px;height:19px;background:#2c2c2c"></div><div class="a" style="left:205px;top:744px;width:1px;height:19px;background:#555"></div><div class="t" style="left:9px;top:745.5px">Name</div><div class="t" style="left:108.5px;top:745.5px;letter-spacing:0.49px">Duration</div><div class="t" style="left:208px;top:745.5px">Rate</div><div class="a" style="left:6px;top:764px;width:345px;height:20px;background:#2a82da"></div><svg class="a" style="left:28px;top:766px" width="18" height="16"><rect x="2" y="4.5" width="9.6" height="7.6" fill="none" stroke="#a9d6ea" stroke-width="1.9"/><path d="M12.2 8.3l4.6-4.2v8.4z" fill="#a9d6ea"/></svg><svg class="a" style="left:28px;top:786px" width="18" height="16"><rect x="1" y=".5" width="12.8" height="4" rx="1.2" fill="#e9e9e9"/><rect x="5.2" y="6" width="11.8" height="4" rx="1.2" fill="#f2f2f2"/><rect x="1" y="11.5" width="12.8" height="4" rx="1.2" fill="#e9e9e9"/></svg><div class="t" style="left:51.5px;top:766.5px;letter-spacing:-0.36px">P1270...</div><div class="t" style="left:109px;top:766.5px">00:00:14;00</div><div class="t" style="left:209px;top:766.5px;letter-spacing:-0.42px">59.9401 FPS</div><div class="t" style="left:51.5px;top:786.5px;letter-spacing:-0.15px">Seque...</div><div class="t" style="left:109px;top:786.5px">00:00:14;00</div><div class="t" style="left:209px;top:786.5px;letter-spacing:-0.42px">59.9401 FPS</div><div class="t " style="left:367px;top:686.5px;">To...</div><svg class="di" style="left:395px;top:688px" viewBox="0 0 11 11"><path d="M1.8 .5h7.4l1.3 1.3v7.4l-1.3 1.3h-7.4l-1.300-1.300v-7.400z" fill="none" stroke="#8d8983" stroke-width="1"/><path d="M4.5 4.5v-2h4v4h-2" fill="none" stroke="#8d8983"/><rect x="2.5" y="4.5" width="4" height="4" fill="none" stroke="#8d8983"/></svg><svg class="di" style="left:409px;top:688px" viewBox="0 0 11 11"><path d="M1.8 .5h7.4l1.3 1.3v7.4l-1.3 1.3h-7.4l-1.300-1.300v-7.400z" fill="none" stroke="#8d8983" stroke-width="1"/><path d="M2 2l7 7M9 2l-7 7" stroke="#8d8983" stroke-width="1.6"/></svg><div class="btn on" style="left:368px;top:709px;width:28px;height:24px"><i></i><svg width="16" height="16" viewBox="0 0 16 16" style="margin:-8.0px 0 0 -8.0px"><path d="M2.6 .2v12.6l3-2.6 2.5 5.5 2.6-1.2-2.5-5.3 4.6-.6z" fill="#fff"/></svg></div><div class="btn" style="left:368px;top:739px;width:28px;height:24px"><i></i><svg width="16" height="16" viewBox="0 0 16 16" style="margin:-8.0px 0 0 -8.0px"><path d="M3.8 .7c2.4 0 4.2.3 4.2 1.8 0-1.500 1.800-1.800 4.200-1.800M3.8 15.300c2.400 0 4.200-.300 4.200-1.800 0 1.500 1.800 1.800 4.200 1.800M8 2v12M6.800 7.700h2.400" fill="none" stroke="#ececec" stroke-width="1.3"/></svg></div><div class="btn" style="left:368px;top:769px;width:28px;height:24px"><i></i><svg width="16" height="16" viewBox="0 0 16 16" style="margin:-8.0px 0 0 -8.0px"><rect x="7.1" y="1.400" width="1.800" height="13" fill="#ececec"/><path d="M2 8h12" stroke="#ececec" stroke-width="1.800"/><path d="M0.5 8l3.6 -3.6v7.2z" fill="#ececec" stroke="#ececec" stroke-width=".6" stroke-linejoin="round"/><path d="M15.5 8l-3.6 -3.6v7.2z" fill="#ececec" stroke="#ececec" stroke-width=".6" stroke-linejoin="round"/></svg></div><div class="btn" style="left:368px;top:799px;width:28px;height:24px"><i></i><svg width="16" height="16" viewBox="0 0 16 16" style="margin:-8.0px 0 0 -8.0px"><rect x="7.300" y="1.800" width="1.400" height="13.400" fill="#c4c4c4"/><path d="M2 3.600h12M2 12.300h12" stroke="#ececec" stroke-width="1.700"/><path d="M0.5 3.6l3.2 -3.2v6.4z" fill="#ececec" stroke="#ececec" stroke-width=".6" stroke-linejoin="round"/><path d="M15.5 3.6l-3.2 -3.2v6.4z" fill="#ececec" stroke="#ececec" stroke-width=".6" stroke-linejoin="round"/><path d="M0.5 12.3l3.2 -3.2v6.4z" fill="#ececec" stroke="#ececec" stroke-width=".6" stroke-linejoin="round"/><path d="M15.5 12.3l-3.2 -3.2v6.4z" fill="#ececec" stroke="#ececec" stroke-width=".6" stroke-linejoin="round"/></svg></div><div class="btn" style="left:368px;top:829px;width:28px;height:24px"><i></i><svg width="16" height="16" viewBox="0 0 16 16" style="margin:-8.0px 0 0 -8.0px"><path d="M0 3.500h16v2.600a1.200 1.200 0 0 0 0 2.400v2.100h-16v-2.100a1.200 1.200 0 0 0 0-2.400z" fill="#a9a7a3"/><rect x="0" y="10.600" width="16" height="3.100" fill="#ececec"/><rect x="7" y="5.600" width="2" height="3.400" rx="1" fill="#3e3e3e"/></svg></div><div class="btn" style="left:368px;top:859px;width:28px;height:24px"><i></i><svg width="16" height="16" viewBox="0 0 16 16" style="margin:-8.0px 0 0 -8.0px"><path d="M.900 1.400v13.400M15.100 1.400v13.400" stroke="#ececec" stroke-width="1.500"/><path d="M4 8h8" stroke="#ececec" stroke-width="1.800"/><path d="M2 8l3.6 -3.6v7.2z" fill="#ececec" stroke="#ececec" stroke-width=".6" stroke-linejoin="round"/><path d="M14 8l-3.6 -3.6v7.2z" fill="#ececec" stroke="#ececec" stroke-width=".6" stroke-linejoin="round"/></svg></div><div class="btn" style="left:368px;top:889px;width:28px;height:24px"><i></i><svg width="16" height="16" viewBox="0 0 16 16" style="margin:-8.0px 0 0 -8.0px"><rect x="5.500" y="1.400" width="5" height="13.400" fill="#9f9d99"/><path d="M2 8h3.500M10.500 8h3.500" stroke="#ececec" stroke-width="1.800"/><path d="M0 8l3.6 -3.6v7.2z" fill="#ececec" stroke="#ececec" stroke-width=".6" stroke-linejoin="round"/><path d="M16 8l-3.6 -3.6v7.2z" fill="#ececec" stroke="#ececec" stroke-width=".6" stroke-linejoin="round"/></svg></div><div class="btn" style="left:368px;top:919px;width:28px;height:24px"><i></i><svg width="16" height="16" viewBox="0 0 16 16" style="margin:-8.0px 0 0 -8.0px"><g transform="translate(.4 0) scale(1.2 1)"><path d="M5.200 9.500v-6.300c0-1.300 1.700-1.300 1.700 0v-1.300c0-1.300 1.800-1.300 1.800 0v1c0-1.300 1.800-1.300 1.800 0v1.500c0-1.300 1.800-1.300 1.800 0v6.600c0 3-1.700 4.600-4.300 4.600-2.600 0-3.600-1.300-5-3.300l-2-2.600c-.800-1.100.600-2 1.500-1.200z" fill="#6c6a66" stroke="#ececec" stroke-width="1.200" stroke-linejoin="round"/><path d="M6.900 3.200v4M8.700 2.900v4.300M10.500 4.400v2.800" stroke="#ececec" stroke-width=".9"/></g></svg></div><div class="btn" style="left:368px;top:949px;width:28px;height:24px"><i></i><svg width="16" height="16" viewBox="0 0 16 16" style="margin:-8.0px 0 0 -8.0px"><circle cx="9.300" cy="7.200" r="5.700" fill="none" stroke="#ececec" stroke-width="1.700"/><path d="M9.300 4.200v6M6.300 7.200h6" stroke="#ececec" stroke-width="1.900"/><path d="M5 11.400l-3.600 3.400" stroke="#ececec" stroke-width="2.300" stroke-linecap="round"/></svg></div><div class="btn" style="left:368px;top:979px;width:28px;height:24px"><i></i><svg width="16" height="16" viewBox="0 0 16 16" style="margin:-8.0px 0 0 -8.0px"><circle cx="8" cy="8" r="4.200" fill="#ececec"/></svg></div><div class="btn" style="left:368px;top:1009px;width:28px;height:24px"><i></i><svg width="16" height="16" viewBox="0 0 16 16" style="margin:-8.0px 0 0 -8.0px"><rect x=".700" y=".700" width="13" height="13" fill="#3a3a3a" stroke="#ececec" stroke-width="1.400"/><path d="M1.400 1.400h11.600l-11.600 11.600z" fill="#e4e4e4"/><path d="M16.200 13.200v3h-3z" fill="#ececec"/></svg></div><div class="a" style="left:368px;top:1039px;width:28px;height:5px;overflow:hidden"><div class="btn" style="left:0px;top:0px;width:28px;height:24px"><i></i></div></div><svg class="a" style="left:360px;top:860px" width="2" height="18" shape-rendering="crispEdges"><rect x="0" y="0" width="2" height="2" fill="#9c9a97"/><rect x="0" y="3" width="2" height="2" fill="#9c9a97"/><rect x="0" y="6" width="2" height="2" fill="#9c9a97"/><rect x="0" y="9" width="2" height="2" fill="#9c9a97"/><rect x="0" y="12" width="2" height="2" fill="#9c9a97"/><rect x="0" y="15" width="2" height="2" fill="#9c9a97"/></svg><svg class="a" style="left:425px;top:860px" width="2" height="18" shape-rendering="crispEdges"><rect x="0" y="0" width="2" height="2" fill="#9c9a97"/><rect x="0" y="3" width="2" height="2" fill="#9c9a97"/><rect x="0" y="6" width="2" height="2" fill="#9c9a97"/><rect x="0" y="9" width="2" height="2" fill="#9c9a97"/><rect x="0" y="12" width="2" height="2" fill="#9c9a97"/><rect x="0" y="15" width="2" height="2" fill="#9c9a97"/></svg><div class="t " style="left:432px;top:686.5px;">Timeline: Sequence 1</div><svg class="di" style="left:1828px;top:688px" viewBox="0 0 11 11"><path d="M1.8 .5h7.4l1.3 1.3v7.4l-1.3 1.3h-7.4l-1.300-1.300v-7.400z" fill="none" stroke="#8d8983" stroke-width="1"/><path d="M4.5 4.5v-2h4v4h-2" fill="none" stroke="#8d8983"/><rect x="2.5" y="4.5" width="4" height="4" fill="none" stroke="#8d8983"/></svg><svg class="di" style="left:1842px;top:688px" viewBox="0 0 11 11"><path d="M1.8 .5h7.4l1.3 1.3v7.4l-1.3 1.3h-7.4l-1.300-1.300v-7.400z" fill="none" stroke="#8d8983" stroke-width="1"/><path d="M2 2l7 7M9 2l-7 7" stroke="#8d8983" stroke-width="1.6"/></svg><div class="t" style="left:470px;top:730.5px;height:15px"><span class="tc" style="display:inline-block;height:15px">00:00:00;00</span></div><div class="a" style="left:576px;top:706px;width:1274px;height:24px;overflow:hidden"><div class="t" style="left:-58.5px;width:120px;text-align:center;top:4.5px">00:00:00;00</div><div class="t" style="left:31.5px;width:120px;text-align:center;top:4.5px">00:00:01;00</div><div class="t" style="left:121.5px;width:120px;text-align:center;top:4.5px">00:00:02;00</div><div class="t" style="left:211.5px;width:120px;text-align:center;top:4.5px">00:00:03;00</div><div class="t" style="left:301.5px;width:120px;text-align:center;top:4.5px">00:00:04;00</div><div class="t" style="left:391.5px;width:120px;text-align:center;top:4.5px">00:00:05;00</div><div class="t" style="left:481.5px;width:120px;text-align:center;top:4.5px">00:00:06;00</div><div class="t" style="left:571.5px;width:120px;text-align:center;top:4.5px">00:00:07;00</div><div class="t" style="left:661.5px;width:120px;text-align:center;top:4.5px">00:00:08;00</div><div class="t" style="left:751.5px;width:120px;text-align:center;top:4.5px">00:00:09;00</div><div class="t" style="left:841.5px;width:120px;text-align:center;top:4.5px">00:00:10;00</div><div class="t" style="left:931.5px;width:120px;text-align:center;top:4.5px">00:00:11;00</div><div class="t" style="left:1021.5px;width:120px;text-align:center;top:4.5px">00:00:12;00</div><div class="t" style="left:1111.5px;width:120px;text-align:center;top:4.5px">00:00:13;00</div><div class="t" style="left:1201.5px;width:120px;text-align:center;top:4.5px">00:00:14;00</div></div><svg class="a" style="left:0;top:700px" width="1920" height="380" viewBox="0 700 1920 380" shape-rendering="crispEdges"><path d="M592.5 754V763M607.5 754V763M622.5 754V763M637.5 754V763M652.5 754V763M667.5 745V763M682.5 754V763M697.5 754V763M712.5 754V763M727.5 754V763M742.5 754V763M757.5 745V763M772.5 754V763M787.5 754V763M802.5 754V763M817.5 754V763M832.5 754V763M847.5 745V763M862.5 754V763M877.5 754V763M892.5 754V763M907.5 754V763M922.5 754V763M937.5 745V763M952.5 754V763M967.5 754V763M982.5 754V763M997.5 754V763M1012.5 754V763M1027.5 745V763M1042.5 754V763M1057.5 754V763M1072.5 754V763M1087.5 754V763M1102.5 754V763M1117.5 745V763M1132.5 754V763M1147.5 754V763M1162.5 754V763M1177.5 754V763M1192.5 754V763M1207.5 745V763M1222.5 754V763M1237.5 754V763M1252.5 754V763M1267.5 754V763M1282.5 754V763M1297.5 745V763M1312.5 754V763M1327.5 754V763M1342.5 754V763M1357.5 754V763M1372.5 754V763M1387.5 745V763M1402.5 754V763M1417.5 754V763M1432.5 754V763M1447.5 754V763M1462.5 754V763M1477.5 745V763M1492.5 754V763M1507.5 754V763M1522.5 754V763M1537.5 754V763M1552.5 754V763M1567.5 745V763M1582.5 754V763M1597.5 754V763M1612.5 754V763M1627.5 754V763M1642.5 754V763M1657.5 745V763M1672.5 754V763M1687.5 754V763M1702.5 754V763M1717.5 754V763M1732.5 754V763M1747.5 745V763M1762.5 754V763M1777.5 754V763M1792.5 754V763M1807.5 754V763M1822.5 754V763M1837.5 745V763" stroke="#fff" stroke-width="1" fill="none"/><rect x="576" y="763" width="450" height="4" fill="#00ff00"/><rect x="1026" y="763" width="811" height="4" fill="#ff0000"/><g fill="none" stroke="#242424" stroke-width="1"><path d="M433.5 768.5h138v127h-138zM433.5 841.500h138"/><path d="M433.5 901.5h138v127h-138zM433.5 956.500h138"/></g><rect x="578" y="840" width="1257" height="1" fill="#0c0c0c"/><rect x="576" y="901" width="1260" height="1" fill="#1e1e1e"/><rect x="433" y="1029" width="1417" height="2" fill="#2a2a2a"/></svg><div class="a" style="left:578px;top:841px;width:1257px;height:53px;background:linear-gradient(#7b79b8,#6a689f 60%,#65639a);border-top:1px solid #fff"></div><div class="a" style="left:578px;top:894px;width:1258px;height:3px;background:linear-gradient(#3a3a36,#272727)"></div><div class="a" style="left:578px;top:902px;width:1257px;height:53px;background:linear-gradient(#7b79b8,#6a689f 60%,#65639a);border-top:1px solid #fff"></div><div class="a" style="left:578px;top:955px;width:1258px;height:3px;background:linear-gradient(#3a3a36,#1e1e1e)"></div><svg class="a" style="left:0;top:900px" width="1920" height="60" viewBox="0 900 1920 60" shape-rendering="crispEdges"><path d="M578 916V915.5h1V915.5h1V915.5h1V915.5h1V915.5h1V915.5h1V915.5h1V915.5h1V915.5h1V915.5h1V915.5h1V915.5h1V915.5h1V915.5h1V915.5h1V915.5h1V915.5h1V915.5h1V915.5h1V915.5h1V915.5h1V915.5h1V915.5h1V915.5h1V915.5h1V915.5h1V915.5h1V915.5h1V915.5h1V910.0h1V911.5h1V911.0h1V910.5h1V908.5h1V910.5h1V910.5h1V910.0h1V910.0h1V911.5h1V911.5h1V910.0h1V910.0h1V910.5h1V910.5h1V909.0h1V911.5h1V912.0h1V912.0h1V911.5h1V911.5h1V912.0h1V912.0h1V907.5h1V910.5h1V911.0h1V911.0h1V912.0h1V912.0h1V911.0h1V910.0h1V909.5h1V910.0h1V912.0h1V910.5h1V912.5h1V912.5h1V913.0h1V913.0h1V913.5h1V913.5h1V913.5h1V913.5h1V912.5h1V912.5h1V913.5h1V913.5h1V912.0h1V912.0h1V913.5h1V913.5h1V912.5h1V910.5h1V913.5h1V913.5h1V913.5h1V913.5h1V912.5h1V912.5h1V912.0h1V912.0h1V911.0h1V912.0h1V913.5h1V913.5h1V913.5h1V913.5h1V913.5h1V913.5h1V913.5h1V913.5h1V913.0h1V913.0h1V913.5h1V913.5h1V912.5h1V912.5h1V913.0h1V913.5h1V914.0h1V914.0h1V910.5h1V912.5h1V911.5h1V911.5h1V913.0h1V913.0h1V912.5h1V912.5h1V911.5h1V911.5h1V913.0h1V913.0h1V913.0h1V913.0h1V911.0h1V911.0h1V913.0h1V913.0h1V911.5h1V911.5h1V913.0h1V913.0h1V913.5h1V913.5h1V913.5h1V913.5h1V912.0h1V913.5h1V911.5h1V913.0h1V912.0h1V912.0h1V912.0h1V912.0h1V913.5h1V913.5h1V912.5h1V912.5h1V913.0h1V912.0h1V906.5h1V913.5h1V913.5h1V913.5h1V913.0h1V913.0h1V913.0h1V913.0h1V913.0h1V913.0h1V912.5h1V912.5h1V913.0h1V912.5h1V910.0h1V910.0h1V910.0h1V910.0h1V909.5h1V910.0h1V910.0h1V907.0h1V911.0h1V911.0h1V908.0h1V908.0h1V907.5h1V908.0h1V911.0h1V911.0h1V911.0h1V909.0h1V910.5h1V910.5h1V911.5h1V912.0h1V912.0h1V910.5h1V912.0h1V912.0h1V909.5h1V911.5h1V911.5h1V912.0h1V910.5h1V910.5h1V912.5h1V912.5h1V911.5h1V911.5h1V912.5h1V912.5h1V912.0h1V911.5h1V912.0h1V912.0h1V913.5h1V913.0h1V911.5h1V911.5h1V912.5h1V913.5h1V910.5h1V912.0h1V911.5h1V909.0h1V911.0h1V911.0h1V911.5h1V911.5h1V911.5h1V911.5h1V912.5h1V912.5h1V911.5h1V911.5h1V912.5h1V912.5h1V911.0h1V911.0h1V911.5h1V911.5h1V913.0h1V911.0h1V912.5h1V912.5h1V912.5h1V912.5h1V911.0h1V911.0h1V912.5h1V912.0h1V911.0h1V912.5h1V910.5h1V909.0h1V911.5h1V911.5h1V909.5h1V911.0h1V911.5h1V911.5h1V909.5h1V911.0h1V908.5h1V908.5h1V909.5h1V910.0h1V910.5h1V911.0h1V909.5h1V909.5h1V910.0h1V910.5h1V909.5h1V912.0h1V910.0h1V910.5h1V910.5h1V912.0h1V911.0h1V912.5h1V913.0h1V913.0h1V912.0h1V913.0h1V912.5h1V912.5h1V913.0h1V913.0h1V913.0h1V913.0h1V912.0h1V912.0h1V911.5h1V911.5h1V911.5h1V911.0h1V913.5h1V913.5h1V913.5h1V913.5h1V913.0h1V913.0h1V912.0h1V913.0h1V913.5h1V913.5h1V913.0h1V913.0h1V913.5h1V913.5h1V912.0h1V912.0h1V913.0h1V913.0h1V913.0h1V913.0h1V912.0h1V912.0h1V912.5h1V912.0h1V913.0h1V912.5h1V912.5h1V912.5h1V913.0h1V913.0h1V913.0h1V912.5h1V912.0h1V912.0h1V912.5h1V912.5h1V912.0h1V912.5h1V911.5h1V911.5h1V913.0h1V913.0h1V911.0h1V913.0h1V910.0h1V913.0h1V913.5h1V912.5h1V913.5h1V913.5h1V913.5h1V913.5h1V912.5h1V912.5h1V913.5h1V913.5h1V912.0h1V912.0h1V912.0h1V912.0h1V912.0h1V912.0h1V912.5h1V912.5h1V912.5h1V912.5h1V911.0h1V912.5h1V912.5h1V912.5h1V913.0h1V913.0h1V911.5h1V913.5h1V912.0h1V913.0h1V913.5h1V913.5h1V913.0h1V913.0h1V913.0h1V912.0h1V910.5h1V912.5h1V911.5h1V912.5h1V913.5h1V913.5h1V911.5h1V913.0h1V913.0h1V912.5h1V911.5h1V911.5h1V912.0h1V912.0h1V912.5h1V912.5h1V911.0h1V911.0h1V910.0h1V910.0h1V912.0h1V912.0h1V911.0h1V911.0h1V909.5h1V909.5h1V912.0h1V909.5h1V911.0h1V911.0h1V911.0h1V911.0h1V911.5h1V911.5h1V912.0h1V912.0h1V912.5h1V912.5h1V912.5h1V910.0h1V912.0h1V912.5h1V912.5h1V912.5h1V911.5h1V910.0h1V912.5h1V912.5h1V910.0h1V910.0h1V907.5h1V909.5h1V912.5h1V912.5h1V912.0h1V912.0h1V912.0h1V912.0h1V912.5h1V912.5h1V912.0h1V912.0h1V910.5h1V910.5h1V911.5h1V909.0h1V912.5h1V912.5h1V912.0h1V912.0h1V912.5h1V912.0h1V910.0h1V911.5h1V910.0h1V910.0h1V911.5h1V911.0h1V911.5h1V911.5h1V907.5h1V908.0h1V909.0h1V909.5h1V908.5h1V910.5h1V909.0h1V909.0h1V908.0h1V910.5h1V909.0h1V909.5h1V911.0h1V911.0h1V910.5h1V911.0h1V910.0h1V910.0h1V908.5h1V908.5h1V910.5h1V908.5h1V908.0h1V908.0h1V911.5h1V911.5h1V909.5h1V909.5h1V910.5h1V911.0h1V908.5h1V907.0h1V907.5h1V907.0h1V907.0h1V906.5h1V910.0h1V910.0h1V906.5h1V906.5h1V905.5h1V905.5h1V906.0h1V909.5h1V909.5h1V910.0h1V907.0h1V907.0h1V910.5h1V911.0h1V910.5h1V911.0h1V910.0h1V910.0h1V909.0h1V909.0h1V909.5h1V909.5h1V907.5h1V908.0h1V909.0h1V909.0h1V908.5h1V908.5h1V909.5h1V910.5h1V909.0h1V908.0h1V911.5h1V911.5h1V910.0h1V910.0h1V911.0h1V911.0h1V910.5h1V910.5h1V911.5h1V911.5h1V911.5h1V911.5h1V912.0h1V912.0h1V910.5h1V910.5h1V911.0h1V910.0h1V911.5h1V911.5h1V910.0h1V910.0h1V911.5h1V911.5h1V910.0h1V910.0h1V911.5h1V910.0h1V912.0h1V912.0h1V910.5h1V910.5h1V912.5h1V912.5h1V912.5h1V912.5h1V911.5h1V911.5h1V911.5h1V912.0h1V911.5h1V912.0h1V912.0h1V912.5h1V913.0h1V913.0h1V912.5h1V912.0h1V913.5h1V913.5h1V913.0h1V913.5h1V913.0h1V911.5h1V912.0h1V912.0h1V912.0h1V912.0h1V912.5h1V911.5h1V913.5h1V911.0h1V911.5h1V912.0h1V911.5h1V911.0h1V912.5h1V911.0h1V912.0h1V912.0h1V912.5h1V912.5h1V912.0h1V912.0h1V912.5h1V912.5h1V912.5h1V912.5h1V912.0h1V912.0h1V911.0h1V911.0h1V911.5h1V911.5h1V912.5h1V912.5h1V912.5h1V912.5h1V912.0h1V912.0h1V912.5h1V912.5h1V912.5h1V912.0h1V909.0h1V911.0h1V910.5h1V909.5h1V911.5h1V911.5h1V912.5h1V913.0h1V910.5h1V910.5h1V912.5h1V912.5h1V911.5h1V911.5h1V912.5h1V912.5h1V913.0h1V913.0h1V913.0h1V913.0h1V913.5h1V913.0h1V913.0h1V911.0h1V913.5h1V913.0h1V913.0h1V912.5h1V913.5h1V913.5h1V912.5h1V912.5h1V913.0h1V913.0h1V911.5h1V911.5h1V911.5h1V911.5h1V910.5h1V910.0h1V911.5h1V912.5h1V911.0h1V909.5h1V910.0h1V910.0h1V910.0h1V910.0h1V910.0h1V910.0h1V911.0h1V910.0h1V909.0h1V911.5h1V910.0h1V908.5h1V910.5h1V910.5h1V909.5h1V909.5h1V910.0h1V910.0h1V911.5h1V911.5h1V910.5h1V910.5h1V909.5h1V909.0h1V910.5h1V910.5h1V909.0h1V909.0h1V911.0h1V911.0h1V912.0h1V912.0h1V911.5h1V912.0h1V910.5h1V910.5h1V911.0h1V911.0h1V912.0h1V910.5h1V911.5h1V911.5h1V912.0h1V912.0h1V911.5h1V909.5h1V912.5h1V912.0h1V911.5h1V911.5h1V912.0h1V912.0h1V912.5h1V912.5h1V913.0h1V912.0h1V913.0h1V913.0h1V912.5h1V910.5h1V910.5h1V910.5h1V912.0h1V912.0h1V911.0h1V911.0h1V912.0h1V912.0h1V910.0h1V910.0h1V912.0h1V907.0h1V909.5h1V909.5h1V911.0h1V912.5h1V911.5h1V911.5h1V912.0h1V911.0h1V912.5h1V912.5h1V910.5h1V910.5h1V912.0h1V912.0h1V911.0h1V911.0h1V909.0h1V906.5h1V911.5h1V911.0h1V909.0h1V908.5h1V910.0h1V909.5h1V907.5h1V907.5h1V908.5h1V908.5h1V906.5h1V907.0h1V910.0h1V910.0h1V910.0h1V910.5h1V909.5h1V909.5h1V911.5h1V911.5h1V912.0h1V912.0h1V912.0h1V912.0h1V911.5h1V911.5h1V910.5h1V910.5h1V912.5h1V912.5h1V911.0h1V912.0h1V913.0h1V913.0h1V912.5h1V913.5h1V911.5h1V911.5h1V911.0h1V912.5h1V912.0h1V912.0h1V912.0h1V913.5h1V913.5h1V913.5h1V913.5h1V913.5h1V912.0h1V912.0h1V910.5h1V912.5h1V912.5h1V911.5h1V912.0h1V912.0h1V912.5h1V912.5h1V912.0h1V912.0h1V913.0h1V913.0h1V912.5h1V911.5h1V911.0h1V912.5h1V911.5h1V913.0h1V913.5h1V912.5h1V913.5h1V912.0h1V912.0h1V912.0h1V912.0h1V911.5h1V912.5h1V913.0h1V912.5h1V912.5h1V912.0h1V913.5h1V913.0h1V913.0h1V913.0h1V913.0h1V913.5h1V913.5h1V913.5h1V913.5h1V913.0h1V913.5h1V912.5h1V912.5h1V912.0h1V913.0h1V912.0h1V912.0h1V912.5h1V912.5h1V913.0h1V913.0h1V913.0h1V913.0h1V912.5h1V912.5h1V913.5h1V913.5h1V913.0h1V913.0h1V912.0h1V912.0h1V911.5h1V910.5h1V913.0h1V913.0h1V913.0h1V910.5h1V910.5h1V912.5h1V912.0h1V912.0h1V911.5h1V912.5h1V911.5h1V911.0h1V912.0h1V913.0h1V913.0h1V913.0h1V910.5h1V910.5h1V911.5h1V911.0h1V911.0h1V909.5h1V911.0h1V911.0h1V910.0h1V910.0h1V912.5h1V912.5h1V910.0h1V910.0h1V912.0h1V911.0h1V911.5h1V911.5h1V911.5h1V911.5h1V912.0h1V912.5h1V911.5h1V911.5h1V912.5h1V911.0h1V912.0h1V912.0h1V911.5h1V912.0h1V911.0h1V912.5h1V912.5h1V911.0h1V913.0h1V913.0h1V912.0h1V912.0h1V912.0h1V911.5h1V912.0h1V912.0h1V910.0h1V910.0h1V910.0h1V909.5h1V910.5h1V910.5h1V911.0h1V911.0h1V910.0h1V910.0h1V912.5h1V912.5h1V910.0h1V908.0h1V910.5h1V910.5h1V911.5h1V911.5h1V911.0h1V911.0h1V909.5h1V909.0h1V911.0h1V908.0h1V910.5h1V911.0h1V911.0h1V911.0h1V906.5h1V906.0h1V908.5h1V908.0h1V909.0h1V909.0h1V908.0h1V906.5h1V908.5h1V908.5h1V909.5h1V910.0h1V910.5h1V911.0h1V910.5h1V910.5h1V910.0h1V910.0h1V911.5h1V912.0h1V912.0h1V912.5h1V910.0h1V911.0h1V912.0h1V912.5h1V911.0h1V911.0h1V912.0h1V912.0h1V913.0h1V912.5h1V910.5h1V910.0h1V910.0h1V909.5h1V909.5h1V909.0h1V907.5h1V909.5h1V908.5h1V909.0h1V911.5h1V911.5h1V909.0h1V909.5h1V911.0h1V909.0h1V911.0h1V911.0h1V912.5h1V912.5h1V912.0h1V912.5h1V912.0h1V913.0h1V912.0h1V913.0h1V911.5h1V910.0h1V912.5h1V912.5h1V912.0h1V911.5h1V910.5h1V910.0h1V911.5h1V911.0h1V911.0h1V911.5h1V909.0h1V908.5h1V908.5h1V908.5h1V909.0h1V909.0h1V910.5h1V910.5h1V909.5h1V908.5h1V908.0h1V908.5h1V911.0h1V911.5h1V912.0h1V910.0h1V910.5h1V911.0h1V913.5h1V913.5h1V912.5h1V912.5h1V912.5h1V912.5h1V913.0h1V913.0h1V912.5h1V912.5h1V913.0h1V913.0h1V913.0h1V913.0h1V913.5h1V913.5h1V913.5h1V913.5h1V913.5h1V913.5h1V912.5h1V913.0h1V910.5h1V912.5h1V912.0h1V912.0h1V912.0h1V912.0h1V913.5h1V910.0h1V913.0h1V913.0h1V912.0h1V912.0h1V913.0h1V913.0h1V912.0h1V912.5h1V911.5h1V912.5h1V912.5h1V913.0h1V912.0h1V912.0h1V911.5h1V911.5h1V910.0h1V912.5h1V911.0h1V910.5h1V910.0h1V910.0h1V911.0h1V911.5h1V909.0h1V912.0h1V910.0h1V911.0h1V910.0h1V910.0h1V910.5h1V910.5h1V912.5h1V912.5h1V912.0h1V912.0h1V912.5h1V912.5h1V912.0h1V912.5h1V913.0h1V913.0h1V911.5h1V911.5h1V912.0h1V912.0h1V912.5h1V912.5h1V912.5h1V912.5h1V913.0h1V911.5h1V910.5h1V910.5h1V913.0h1V912.5h1V912.0h1V910.0h1V911.0h1V911.0h1V910.0h1V910.5h1V912.0h1V912.0h1V910.5h1V910.5h1V912.5h1V912.0h1V910.5h1V909.0h1V909.5h1V909.0h1V909.0h1V909.0h1V911.0h1V911.0h1V909.0h1V909.0h1V908.0h1V908.5h1V908.5h1V908.5h1V909.0h1V909.0h1V907.5h1V908.5h1V906.5h1V906.5h1V907.5h1V909.5h1V906.0h1V906.0h1V906.5h1V906.5h1V910.0h1V909.5h1V909.5h1V907.5h1V909.5h1V910.0h1V910.0h1V907.0h1V909.0h1V909.5h1V909.5h1V911.5h1V911.5h1V912.0h1V911.5h1V910.0h1V911.0h1V911.0h1V910.0h1V910.0h1V910.5h1V912.5h1V911.5h1V911.5h1V912.0h1V912.0h1V912.0h1V912.0h1V911.5h1V911.5h1V912.0h1V912.0h1V912.5h1V913.0h1V911.0h1V911.5h1V912.5h1V912.5h1V912.5h1V910.0h1V911.5h1V911.5h1V911.0h1V911.5h1V912.0h1V912.0h1V911.5h1V911.5h1V912.5h1V912.5h1V912.5h1V912.0h1V912.0h1V912.0h1V912.0h1V911.5h1V911.0h1V910.0h1V910.5h1V910.0h1V911.0h1V908.5h1V907.5h1V905.5h1V909.0h1V909.0h1V906.5h1V906.5h1V909.0h1V909.0h1V910.5h1V910.5h1V908.5h1V908.5h1V907.5h1V907.5h1V910.5h1V910.0h1V908.5h1V910.5h1V910.0h1V908.0h1V910.5h1V911.0h1V909.0h1V909.5h1V909.0h1V909.5h1V911.5h1V912.0h1V912.0h1V911.5h1V912.5h1V912.0h1V911.0h1V908.0h1V906.0h1V905.5h1V909.0h1V916V927.5h-1V927.0h-1V926.5h-1V924.5h-1V923.0h-1V921.5h-1V920.5h-1V920.5h-1V920.0h-1V923.0h-1V921.5h-1V922.0h-1V922.5h-1V921.0h-1V921.0h-1V923.5h-1V924.0h-1V925.0h-1V922.0h-1V923.5h-1V921.5h-1V921.0h-1V921.0h-1V922.0h-1V922.0h-1V924.0h-1V922.5h-1V925.0h-1V925.5h-1V922.5h-1V923.0h-1V922.5h-1V922.5h-1V926.5h-1V926.0h-1V923.5h-1V923.0h-1V925.5h-1V924.0h-1V924.5h-1V924.0h-1V921.5h-1V921.0h-1V922.5h-1V922.0h-1V920.5h-1V920.5h-1V920.5h-1V922.0h-1V919.5h-1V921.0h-1V921.0h-1V921.0h-1V919.5h-1V919.5h-1V919.5h-1V919.5h-1V921.0h-1V921.0h-1V920.5h-1V920.5h-1V920.0h-1V920.0h-1V921.5h-1V921.5h-1V921.0h-1V921.0h-1V919.5h-1V919.5h-1V922.0h-1V922.0h-1V921.0h-1V921.0h-1V922.5h-1V922.5h-1V920.0h-1V920.0h-1V921.5h-1V919.5h-1V919.5h-1V919.5h-1V920.0h-1V920.5h-1V921.5h-1V923.0h-1V922.5h-1V920.5h-1V920.0h-1V921.5h-1V923.5h-1V923.5h-1V925.5h-1V923.0h-1V924.0h-1V923.0h-1V924.0h-1V924.0h-1V923.5h-1V923.5h-1V923.0h-1V923.0h-1V922.5h-1V922.5h-1V921.5h-1V922.0h-1V922.0h-1V922.0h-1V922.5h-1V923.5h-1V923.0h-1V923.0h-1V922.0h-1V922.0h-1V926.0h-1V923.0h-1V921.5h-1V921.5h-1V924.0h-1V923.5h-1V922.0h-1V920.5h-1V920.5h-1V920.5h-1V920.0h-1V920.0h-1V920.0h-1V920.0h-1V920.5h-1V920.5h-1V921.0h-1V921.0h-1V924.0h-1V921.5h-1V920.0h-1V920.0h-1V919.5h-1V920.5h-1V919.5h-1V919.0h-1V919.5h-1V919.5h-1V921.0h-1V919.5h-1V921.5h-1V921.5h-1V919.5h-1V919.5h-1V919.5h-1V919.5h-1V920.0h-1V920.0h-1V919.5h-1V920.0h-1V921.0h-1V919.5h-1V919.0h-1V919.0h-1V920.0h-1V920.5h-1V919.5h-1V920.0h-1V920.0h-1V920.0h-1V922.0h-1V920.0h-1V921.5h-1V920.5h-1V921.0h-1V920.5h-1V922.0h-1V920.5h-1V920.5h-1V920.5h-1V920.0h-1V920.5h-1V921.0h-1V921.0h-1V923.0h-1V920.5h-1V922.0h-1V920.5h-1V920.0h-1V920.5h-1V920.5h-1V921.0h-1V918.5h-1V920.0h-1V920.0h-1V921.5h-1V920.5h-1V920.5h-1V919.5h-1V919.5h-1V919.5h-1V918.5h-1V919.5h-1V919.5h-1V918.5h-1V920.5h-1V918.5h-1V918.5h-1V920.0h-1V919.5h-1V920.0h-1V920.0h-1V919.0h-1V919.0h-1V918.5h-1V918.5h-1V919.5h-1V919.5h-1V918.0h-1V918.0h-1V919.5h-1V919.5h-1V919.5h-1V920.0h-1V919.0h-1V919.0h-1V919.5h-1V919.5h-1V918.5h-1V918.5h-1V919.5h-1V919.5h-1V920.5h-1V920.0h-1V921.0h-1V921.0h-1V923.5h-1V924.0h-1V921.5h-1V922.0h-1V925.0h-1V926.5h-1V924.0h-1V924.0h-1V923.0h-1V923.0h-1V923.0h-1V924.5h-1V921.0h-1V923.5h-1V920.0h-1V920.0h-1V921.0h-1V920.5h-1V920.0h-1V920.0h-1V922.5h-1V920.5h-1V919.5h-1V919.5h-1V920.0h-1V919.0h-1V919.0h-1V919.0h-1V919.0h-1V919.0h-1V919.5h-1V919.5h-1V922.0h-1V921.0h-1V922.0h-1V922.0h-1V922.5h-1V920.5h-1V921.5h-1V921.5h-1V921.0h-1V921.0h-1V921.0h-1V921.5h-1V922.0h-1V921.5h-1V920.5h-1V922.5h-1V922.0h-1V921.5h-1V919.5h-1V919.5h-1V919.0h-1V919.0h-1V921.0h-1V921.0h-1V920.5h-1V920.5h-1V919.5h-1V919.5h-1V920.0h-1V920.0h-1V922.5h-1V922.5h-1V921.0h-1V921.0h-1V923.5h-1V923.5h-1V924.5h-1V923.0h-1V922.0h-1V922.0h-1V923.5h-1V923.5h-1V922.5h-1V923.0h-1V924.0h-1V924.0h-1V923.5h-1V923.5h-1V925.5h-1V925.0h-1V922.5h-1V922.5h-1V922.5h-1V922.0h-1V922.5h-1V923.5h-1V923.0h-1V923.0h-1V923.0h-1V922.5h-1V920.0h-1V920.0h-1V923.5h-1V922.0h-1V921.5h-1V921.5h-1V922.0h-1V923.5h-1V921.5h-1V921.5h-1V920.5h-1V920.5h-1V921.5h-1V921.5h-1V921.0h-1V920.0h-1V920.0h-1V921.0h-1V921.0h-1V921.0h-1V921.5h-1V921.5h-1V920.5h-1V920.5h-1V920.0h-1V920.0h-1V918.5h-1V918.5h-1V920.5h-1V920.5h-1V918.5h-1V918.5h-1V920.0h-1V920.0h-1V919.0h-1V920.5h-1V920.0h-1V920.0h-1V920.5h-1V920.5h-1V919.5h-1V920.5h-1V919.5h-1V919.5h-1V922.0h-1V921.5h-1V922.0h-1V922.0h-1V922.5h-1V922.5h-1V922.5h-1V922.5h-1V921.5h-1V921.5h-1V921.5h-1V922.0h-1V920.0h-1V919.5h-1V919.5h-1V919.5h-1V920.5h-1V920.5h-1V921.0h-1V921.0h-1V920.5h-1V923.0h-1V920.0h-1V919.0h-1V919.5h-1V919.5h-1V918.5h-1V918.5h-1V921.0h-1V920.0h-1V918.5h-1V918.5h-1V919.0h-1V919.0h-1V918.5h-1V918.5h-1V918.5h-1V918.5h-1V919.0h-1V919.0h-1V920.5h-1V918.5h-1V919.0h-1V919.0h-1V919.0h-1V919.0h-1V918.5h-1V918.5h-1V919.5h-1V919.5h-1V919.5h-1V919.5h-1V918.5h-1V918.5h-1V920.0h-1V920.0h-1V919.5h-1V919.5h-1V919.5h-1V920.5h-1V918.5h-1V918.5h-1V919.5h-1V919.5h-1V919.0h-1V918.5h-1V918.5h-1V918.5h-1V919.0h-1V919.0h-1V919.5h-1V918.5h-1V920.0h-1V920.0h-1V920.0h-1V919.5h-1V919.5h-1V920.5h-1V918.5h-1V918.5h-1V919.0h-1V919.0h-1V918.5h-1V918.5h-1V918.5h-1V918.5h-1V919.0h-1V919.0h-1V919.0h-1V919.0h-1V919.0h-1V919.0h-1V918.5h-1V918.5h-1V920.0h-1V920.0h-1V920.0h-1V921.0h-1V920.0h-1V920.0h-1V919.0h-1V919.0h-1V918.5h-1V919.0h-1V919.0h-1V919.0h-1V919.5h-1V919.0h-1V920.0h-1V920.0h-1V920.5h-1V922.0h-1V919.0h-1V919.0h-1V919.0h-1V919.5h-1V919.0h-1V919.0h-1V920.5h-1V920.5h-1V920.0h-1V920.5h-1V922.5h-1V922.5h-1V923.0h-1V923.0h-1V921.5h-1V921.5h-1V922.0h-1V922.0h-1V922.5h-1V923.0h-1V921.5h-1V922.0h-1V921.5h-1V921.5h-1V921.5h-1V923.0h-1V925.0h-1V925.0h-1V921.5h-1V921.5h-1V924.5h-1V924.0h-1V921.0h-1V921.0h-1V920.5h-1V920.0h-1V920.5h-1V921.0h-1V921.0h-1V921.0h-1V921.5h-1V921.5h-1V920.5h-1V920.5h-1V919.5h-1V919.5h-1V920.5h-1V920.5h-1V920.5h-1V920.5h-1V921.5h-1V921.5h-1V924.5h-1V919.5h-1V922.5h-1V922.5h-1V921.0h-1V921.0h-1V921.0h-1V921.0h-1V921.5h-1V921.5h-1V920.0h-1V920.0h-1V920.5h-1V920.0h-1V921.5h-1V921.5h-1V920.5h-1V919.0h-1V920.5h-1V920.5h-1V920.5h-1V920.5h-1V918.5h-1V918.5h-1V919.0h-1V921.0h-1V922.0h-1V919.0h-1V919.0h-1V919.0h-1V921.0h-1V921.0h-1V922.0h-1V922.5h-1V920.0h-1V920.0h-1V920.5h-1V921.0h-1V921.5h-1V921.5h-1V922.0h-1V923.5h-1V922.5h-1V922.5h-1V922.0h-1V922.0h-1V921.5h-1V921.5h-1V923.0h-1V924.0h-1V921.0h-1V920.5h-1V920.5h-1V920.5h-1V919.5h-1V919.5h-1V920.0h-1V920.0h-1V920.5h-1V920.5h-1V923.0h-1V922.0h-1V923.0h-1V922.0h-1V920.0h-1V920.0h-1V923.0h-1V923.0h-1V923.0h-1V923.0h-1V920.5h-1V920.5h-1V920.5h-1V921.5h-1V922.0h-1V919.5h-1V920.5h-1V920.0h-1V919.5h-1V919.5h-1V920.0h-1V920.0h-1V919.0h-1V919.0h-1V920.5h-1V920.5h-1V919.5h-1V919.5h-1V919.0h-1V918.5h-1V919.5h-1V919.0h-1V919.5h-1V919.5h-1V919.0h-1V918.5h-1V918.5h-1V918.5h-1V920.0h-1V920.0h-1V918.5h-1V919.0h-1V919.0h-1V919.0h-1V919.5h-1V919.5h-1V921.0h-1V921.0h-1V919.5h-1V919.5h-1V919.5h-1V919.5h-1V920.0h-1V920.0h-1V919.0h-1V919.0h-1V921.0h-1V921.5h-1V919.5h-1V919.5h-1V919.0h-1V919.0h-1V921.0h-1V921.0h-1V919.0h-1V919.0h-1V920.0h-1V920.5h-1V920.0h-1V920.0h-1V921.5h-1V919.0h-1V920.0h-1V920.0h-1V919.5h-1V919.5h-1V919.5h-1V919.5h-1V921.5h-1V921.5h-1V920.0h-1V919.5h-1V919.5h-1V920.0h-1V919.0h-1V919.0h-1V918.5h-1V920.5h-1V920.0h-1V920.0h-1V920.0h-1V920.0h-1V919.5h-1V919.5h-1V918.5h-1V918.5h-1V919.0h-1V920.5h-1V919.0h-1V920.0h-1V919.0h-1V919.0h-1V920.0h-1V919.0h-1V920.0h-1V920.0h-1V919.0h-1V919.5h-1V920.0h-1V921.5h-1V920.0h-1V920.0h-1V921.5h-1V921.5h-1V921.0h-1V921.0h-1V921.0h-1V921.0h-1V921.5h-1V921.5h-1V919.5h-1V921.0h-1V921.0h-1V921.0h-1V919.5h-1V919.5h-1V921.0h-1V921.0h-1V922.0h-1V922.5h-1V919.5h-1V920.0h-1V922.5h-1V922.5h-1V920.0h-1V920.0h-1V922.5h-1V923.0h-1V922.0h-1V921.0h-1V922.5h-1V922.5h-1V923.5h-1V923.5h-1V923.0h-1V923.0h-1V923.5h-1V922.5h-1V922.0h-1V922.0h-1V920.5h-1V921.5h-1V923.5h-1V923.5h-1V922.0h-1V922.0h-1V921.0h-1V921.0h-1V923.0h-1V923.0h-1V922.0h-1V922.0h-1V923.5h-1V923.0h-1V921.0h-1V921.0h-1V923.5h-1V924.0h-1V923.0h-1V923.5h-1V921.5h-1V922.0h-1V924.0h-1V924.0h-1V922.0h-1V923.5h-1V925.5h-1V925.5h-1V925.0h-1V926.5h-1V922.5h-1V922.5h-1V926.0h-1V925.5h-1V927.0h-1V924.5h-1V921.5h-1V923.0h-1V924.0h-1V923.5h-1V922.0h-1V922.0h-1V921.5h-1V924.0h-1V921.5h-1V921.5h-1V922.0h-1V923.0h-1V921.0h-1V921.0h-1V923.0h-1V923.0h-1V921.0h-1V921.0h-1V924.5h-1V924.5h-1V923.5h-1V923.5h-1V924.5h-1V924.0h-1V921.5h-1V921.5h-1V923.0h-1V923.0h-1V924.5h-1V923.0h-1V921.0h-1V923.0h-1V921.5h-1V921.5h-1V920.5h-1V920.0h-1V920.5h-1V920.0h-1V920.5h-1V920.5h-1V922.0h-1V921.5h-1V920.5h-1V920.5h-1V920.0h-1V920.0h-1V920.5h-1V920.5h-1V919.5h-1V919.5h-1V919.0h-1V919.5h-1V919.5h-1V919.5h-1V921.5h-1V921.5h-1V920.0h-1V920.0h-1V922.0h-1V922.0h-1V920.0h-1V920.0h-1V920.5h-1V922.0h-1V921.5h-1V921.5h-1V921.5h-1V921.0h-1V921.5h-1V921.5h-1V921.0h-1V921.0h-1V921.5h-1V921.5h-1V919.5h-1V919.5h-1V921.0h-1V921.0h-1V919.5h-1V919.5h-1V922.0h-1V922.0h-1V922.0h-1V921.5h-1V920.0h-1V921.5h-1V919.5h-1V919.5h-1V919.5h-1V920.0h-1V923.0h-1V923.0h-1V921.0h-1V921.0h-1V921.5h-1V921.5h-1V919.5h-1V919.5h-1V919.5h-1V919.0h-1V919.5h-1V919.5h-1V921.0h-1V920.5h-1V921.5h-1V919.5h-1V920.0h-1V919.5h-1V919.5h-1V920.0h-1V919.0h-1V919.0h-1V919.0h-1V918.5h-1V919.5h-1V919.5h-1V919.5h-1V919.5h-1V920.5h-1V918.5h-1V920.5h-1V918.5h-1V920.5h-1V920.5h-1V920.0h-1V920.0h-1V918.5h-1V918.5h-1V919.0h-1V919.0h-1V919.5h-1V919.0h-1V921.5h-1V919.5h-1V918.5h-1V918.5h-1V919.0h-1V919.0h-1V919.5h-1V919.5h-1V918.5h-1V918.5h-1V920.0h-1V920.0h-1V920.0h-1V920.0h-1V918.5h-1V918.5h-1V919.0h-1V920.5h-1V918.5h-1V919.0h-1V919.5h-1V920.0h-1V919.5h-1V920.0h-1V921.5h-1V922.0h-1V920.5h-1V922.0h-1V920.5h-1V920.5h-1V919.0h-1V919.0h-1V921.5h-1V921.5h-1V919.5h-1V919.5h-1V918.5h-1V920.5h-1V918.5h-1V918.5h-1V919.0h-1V919.0h-1V921.0h-1V919.5h-1V919.0h-1V919.0h-1V919.0h-1V919.0h-1V920.0h-1V920.0h-1V919.0h-1V919.0h-1V920.0h-1V920.0h-1V919.5h-1V918.5h-1V919.0h-1V919.0h-1V919.5h-1V919.5h-1V920.5h-1V920.5h-1V919.5h-1V919.0h-1V919.0h-1V919.0h-1V920.5h-1V920.5h-1V921.0h-1V919.0h-1V920.5h-1V919.0h-1V919.5h-1V919.5h-1V923.0h-1V922.0h-1V919.0h-1V919.0h-1V920.0h-1V919.0h-1V920.5h-1V919.0h-1V921.5h-1V922.0h-1V921.5h-1V921.0h-1V922.5h-1V922.5h-1V923.0h-1V925.0h-1V923.0h-1V923.5h-1V923.5h-1V923.5h-1V923.0h-1V923.0h-1V920.5h-1V920.5h-1V920.5h-1V920.0h-1V920.5h-1V920.5h-1V920.0h-1V919.5h-1V922.0h-1V920.5h-1V922.5h-1V921.5h-1V921.5h-1V921.0h-1V919.5h-1V919.5h-1V919.0h-1V919.0h-1V919.5h-1V919.5h-1V920.5h-1V920.5h-1V919.5h-1V919.5h-1V920.0h-1V920.0h-1V919.0h-1V919.0h-1V919.5h-1V919.5h-1V920.0h-1V920.0h-1V921.0h-1V921.0h-1V921.0h-1V921.0h-1V919.0h-1V919.0h-1V919.0h-1V920.0h-1V919.5h-1V920.0h-1V921.0h-1V920.5h-1V919.5h-1V919.5h-1V920.5h-1V919.5h-1V920.0h-1V920.0h-1V919.5h-1V921.0h-1V920.5h-1V920.5h-1V921.5h-1V921.5h-1V923.5h-1V922.0h-1V919.5h-1V923.5h-1V920.0h-1V920.0h-1V920.0h-1V920.0h-1V923.0h-1V923.0h-1V920.0h-1V920.0h-1V920.0h-1V920.5h-1V921.5h-1V923.0h-1V922.5h-1V921.5h-1V920.5h-1V921.0h-1V925.0h-1V924.0h-1V923.0h-1V923.0h-1V922.5h-1V922.5h-1V923.0h-1V922.5h-1V920.5h-1V921.5h-1V923.0h-1V920.5h-1V922.5h-1V922.0h-1V922.5h-1V920.0h-1V920.5h-1V920.0h-1V918.5h-1V918.5h-1V919.0h-1V919.0h-1V918.5h-1V918.5h-1V918.5h-1V918.5h-1V918.5h-1V925.0h-1V919.5h-1V918.5h-1V919.0h-1V919.0h-1V919.5h-1V919.5h-1V920.0h-1V920.0h-1V919.0h-1V919.0h-1V919.5h-1V919.5h-1V919.5h-1V918.5h-1V918.5h-1V918.5h-1V918.5h-1V918.5h-1V919.5h-1V919.5h-1V919.0h-1V919.5h-1V919.0h-1V918.5h-1V919.0h-1V919.5h-1V919.5h-1V919.5h-1V919.0h-1V919.0h-1V920.5h-1V920.5h-1V919.0h-1V919.0h-1V920.0h-1V920.0h-1V918.5h-1V918.5h-1V920.0h-1V920.0h-1V919.5h-1V919.5h-1V918.5h-1V918.0h-1V920.0h-1V920.0h-1V920.0h-1V920.0h-1V919.5h-1V919.5h-1V919.0h-1V919.0h-1V919.0h-1V919.0h-1V918.5h-1V918.5h-1V918.5h-1V918.5h-1V919.5h-1V918.0h-1V918.0h-1V918.0h-1V920.5h-1V918.5h-1V920.0h-1V920.0h-1V919.5h-1V919.5h-1V920.0h-1V920.0h-1V921.0h-1V918.5h-1V918.5h-1V918.5h-1V918.0h-1V918.0h-1V918.5h-1V918.5h-1V919.5h-1V919.5h-1V918.5h-1V918.5h-1V920.0h-1V920.5h-1V920.5h-1V919.5h-1V920.5h-1V920.5h-1V920.0h-1V920.0h-1V921.5h-1V921.5h-1V921.0h-1V923.0h-1V922.0h-1V922.0h-1V922.0h-1V924.0h-1V923.0h-1V923.0h-1V920.0h-1V921.5h-1V922.0h-1V922.0h-1V924.0h-1V920.0h-1V920.0h-1V920.0h-1V922.5h-1V922.0h-1V920.5h-1V920.5h-1V920.5h-1V922.0h-1V922.0h-1V922.0h-1V919.5h-1V919.5h-1V922.0h-1V922.0h-1V920.0h-1V916.5h-1V916.5h-1V916.5h-1V916.5h-1V916.5h-1V916.5h-1V916.5h-1V916.5h-1V916.5h-1V916.5h-1V916.5h-1V916.5h-1V916.5h-1V916.5h-1V916.5h-1V916.5h-1V916.5h-1V916.5h-1V916.5h-1V916.5h-1V916.5h-1V916.5h-1V916.5h-1V916.5h-1V916.5h-1V916.5h-1V916.5h-1V916.5h-1V916.5h-1z" fill="#3d3d3d"/><path d="M578 942.5V942.0h1V942.0h1V942.0h1V942.0h1V942.0h1V942.0h1V942.0h1V942.0h1V942.0h1V942.0h1V942.0h1V942.0h1V942.0h1V942.0h1V942.0h1V942.0h1V942.0h1V942.0h1V942.0h1V942.0h1V942.0h1V942.0h1V942.0h1V942.0h1V942.0h1V942.0h1V942.0h1V942.0h1V942.0h1V939.5h1V940.0h1V938.5h1V940.0h1V940.5h1V939.5h1V939.5h1V938.5h1V940.0h1V939.0h1V940.0h1V940.0h1V940.0h1V938.5h1V940.5h1V940.0h1V939.5h1V940.0h1V940.0h1V939.5h1V939.5h1V938.5h1V939.0h1V934.5h1V939.5h1V938.0h1V938.0h1V938.0h1V940.0h1V939.5h1V938.5h1V938.5h1V940.0h1V940.0h1V940.0h1V939.5h1V940.5h1V940.5h1V940.5h1V940.0h1V940.0h1V940.5h1V940.5h1V940.0h1V940.0h1V939.0h1V939.0h1V939.5h1V939.5h1V940.0h1V940.5h1V939.5h1V939.5h1V940.0h1V940.0h1V940.5h1V940.5h1V940.5h1V940.5h1V940.5h1V938.5h1V939.0h1V939.0h1V940.0h1V940.0h1V938.0h1V940.0h1V939.5h1V939.5h1V939.0h1V939.0h1V938.5h1V938.5h1V938.5h1V938.5h1V939.5h1V939.5h1V939.5h1V938.5h1V939.5h1V939.5h1V938.5h1V939.5h1V938.5h1V938.5h1V937.5h1V937.5h1V938.5h1V938.5h1V938.0h1V938.0h1V937.0h1V936.5h1V938.0h1V938.0h1V939.0h1V939.0h1V939.0h1V939.0h1V938.0h1V939.0h1V937.0h1V937.0h1V939.0h1V939.0h1V939.0h1V939.5h1V939.5h1V939.5h1V940.0h1V940.0h1V940.0h1V940.0h1V940.0h1V940.0h1V939.5h1V937.5h1V940.0h1V937.5h1V939.0h1V938.5h1V936.5h1V938.0h1V938.0h1V937.5h1V939.5h1V939.5h1V937.0h1V937.0h1V936.5h1V934.5h1V937.5h1V938.5h1V936.0h1V935.5h1V936.5h1V936.0h1V936.5h1V936.5h1V937.5h1V937.5h1V938.0h1V938.0h1V934.5h1V934.5h1V936.5h1V936.5h1V938.0h1V936.5h1V937.0h1V937.0h1V935.0h1V935.0h1V937.5h1V937.5h1V938.0h1V937.0h1V937.0h1V938.0h1V937.0h1V937.0h1V938.0h1V937.0h1V936.0h1V936.0h1V937.5h1V936.5h1V936.0h1V938.0h1V938.5h1V936.5h1V936.0h1V936.0h1V936.5h1V936.5h1V939.0h1V939.0h1V937.5h1V938.0h1V938.5h1V938.5h1V938.0h1V938.0h1V938.0h1V938.0h1V939.0h1V939.0h1V938.5h1V938.5h1V938.5h1V938.5h1V937.5h1V937.0h1V939.5h1V939.5h1V938.5h1V939.0h1V939.0h1V939.0h1V937.5h1V937.5h1V937.0h1V937.0h1V938.5h1V939.5h1V938.0h1V938.0h1V938.5h1V939.0h1V940.0h1V939.5h1V939.0h1V939.0h1V937.5h1V937.5h1V938.0h1V938.0h1V939.0h1V939.0h1V938.0h1V935.5h1V939.0h1V939.0h1V938.5h1V938.5h1V938.0h1V939.0h1V939.0h1V938.5h1V939.0h1V939.0h1V938.5h1V938.5h1V936.0h1V938.0h1V938.5h1V938.0h1V938.5h1V939.0h1V939.5h1V939.5h1V938.5h1V938.5h1V939.5h1V940.0h1V939.5h1V939.5h1V939.0h1V940.5h1V940.0h1V940.0h1V940.0h1V940.0h1V939.5h1V939.5h1V940.0h1V940.0h1V939.0h1V939.0h1V940.0h1V939.5h1V939.5h1V940.0h1V940.0h1V940.5h1V939.0h1V939.0h1V940.5h1V939.0h1V940.0h1V940.0h1V940.5h1V940.5h1V940.0h1V940.0h1V940.0h1V940.0h1V939.0h1V940.5h1V939.5h1V939.5h1V940.0h1V939.5h1V939.0h1V939.0h1V939.5h1V939.0h1V940.0h1V939.5h1V939.5h1V938.0h1V939.0h1V939.0h1V938.5h1V938.0h1V937.0h1V937.0h1V937.5h1V938.0h1V938.5h1V938.5h1V939.5h1V939.5h1V939.5h1V940.0h1V939.5h1V939.5h1V940.0h1V939.0h1V940.0h1V939.5h1V938.5h1V940.0h1V940.5h1V940.0h1V939.0h1V937.0h1V940.5h1V940.5h1V940.0h1V940.0h1V940.0h1V940.0h1V939.0h1V939.0h1V940.5h1V940.5h1V940.0h1V940.0h1V940.0h1V940.0h1V939.5h1V938.5h1V939.5h1V939.5h1V940.0h1V940.0h1V940.0h1V940.0h1V938.5h1V939.0h1V940.0h1V940.0h1V940.0h1V940.0h1V939.0h1V939.0h1V939.0h1V938.5h1V940.0h1V940.0h1V937.5h1V938.5h1V938.5h1V938.0h1V939.0h1V937.5h1V938.5h1V938.5h1V938.0h1V938.0h1V936.5h1V936.0h1V936.5h1V937.0h1V938.0h1V938.0h1V938.5h1V937.5h1V935.0h1V936.5h1V938.5h1V938.5h1V938.0h1V938.0h1V938.5h1V938.0h1V938.0h1V938.0h1V939.5h1V939.5h1V939.5h1V940.0h1V939.5h1V939.5h1V939.0h1V937.5h1V939.5h1V939.5h1V939.0h1V939.0h1V939.5h1V939.5h1V936.0h1V938.0h1V937.5h1V937.5h1V939.5h1V939.5h1V937.5h1V937.5h1V938.0h1V938.0h1V938.0h1V938.0h1V938.5h1V938.5h1V940.0h1V940.0h1V940.0h1V938.0h1V939.5h1V939.5h1V940.0h1V939.5h1V939.0h1V938.5h1V938.5h1V938.5h1V938.5h1V938.5h1V938.0h1V938.0h1V939.5h1V939.5h1V938.0h1V938.0h1V936.5h1V936.5h1V937.0h1V937.0h1V937.0h1V938.5h1V937.0h1V937.0h1V937.0h1V939.5h1V939.0h1V939.5h1V937.0h1V937.5h1V939.0h1V939.0h1V938.5h1V939.0h1V938.5h1V938.5h1V939.5h1V939.5h1V939.5h1V939.5h1V939.0h1V939.0h1V938.0h1V938.0h1V939.5h1V939.0h1V939.0h1V938.5h1V937.5h1V937.0h1V938.5h1V938.5h1V938.5h1V938.5h1V936.5h1V937.0h1V939.5h1V937.0h1V939.0h1V939.0h1V939.5h1V939.0h1V938.0h1V938.0h1V939.5h1V940.0h1V938.5h1V940.0h1V940.0h1V940.0h1V938.5h1V939.0h1V939.0h1V940.0h1V940.5h1V938.5h1V938.5h1V938.5h1V939.0h1V939.0h1V939.5h1V939.5h1V940.0h1V940.0h1V939.0h1V939.0h1V939.5h1V939.5h1V938.5h1V938.5h1V938.5h1V938.0h1V938.5h1V939.0h1V940.0h1V939.0h1V938.5h1V938.5h1V939.5h1V940.0h1V940.0h1V940.0h1V939.5h1V939.5h1V940.0h1V940.0h1V940.0h1V940.0h1V939.5h1V939.5h1V938.5h1V938.5h1V940.0h1V940.0h1V939.5h1V939.5h1V940.0h1V940.0h1V940.0h1V939.0h1V939.5h1V939.5h1V940.0h1V940.0h1V940.0h1V940.0h1V939.5h1V939.5h1V939.0h1V939.0h1V938.5h1V938.5h1V939.5h1V939.5h1V940.0h1V940.0h1V940.0h1V940.0h1V937.5h1V939.0h1V939.5h1V939.5h1V940.0h1V939.5h1V940.0h1V939.5h1V937.5h1V937.5h1V938.0h1V937.0h1V934.5h1V936.5h1V937.0h1V937.0h1V936.0h1V938.5h1V937.5h1V939.0h1V938.5h1V938.5h1V939.0h1V939.0h1V938.0h1V938.5h1V937.0h1V937.0h1V937.5h1V937.5h1V939.5h1V939.5h1V937.0h1V937.0h1V937.0h1V937.0h1V938.5h1V938.5h1V938.5h1V938.0h1V938.0h1V938.5h1V939.0h1V939.0h1V937.5h1V937.5h1V938.5h1V938.5h1V937.0h1V938.0h1V938.5h1V938.5h1V938.5h1V938.5h1V937.5h1V937.5h1V938.0h1V938.0h1V938.5h1V938.5h1V940.0h1V940.0h1V939.0h1V939.0h1V938.0h1V938.0h1V939.0h1V939.0h1V938.5h1V938.5h1V937.0h1V936.5h1V937.0h1V937.5h1V936.0h1V936.0h1V936.0h1V935.5h1V936.0h1V938.0h1V935.0h1V933.5h1V937.5h1V937.5h1V938.0h1V938.0h1V937.5h1V937.5h1V934.5h1V937.0h1V938.0h1V938.5h1V936.5h1V937.0h1V937.5h1V937.5h1V938.5h1V936.5h1V938.5h1V938.5h1V938.0h1V938.0h1V938.5h1V938.5h1V938.0h1V935.0h1V938.0h1V938.0h1V938.0h1V936.5h1V936.5h1V936.5h1V938.0h1V938.0h1V938.0h1V938.0h1V938.5h1V938.5h1V938.0h1V938.0h1V937.5h1V939.0h1V939.0h1V938.5h1V939.0h1V939.0h1V939.0h1V939.0h1V938.5h1V938.5h1V938.5h1V938.5h1V939.5h1V939.5h1V940.0h1V940.0h1V938.0h1V939.5h1V939.5h1V939.5h1V938.0h1V938.0h1V939.0h1V939.0h1V936.5h1V936.5h1V937.0h1V937.0h1V936.5h1V936.0h1V937.0h1V938.5h1V937.0h1V939.0h1V938.5h1V938.5h1V937.5h1V939.0h1V938.5h1V938.5h1V938.0h1V938.0h1V938.5h1V939.0h1V939.0h1V939.0h1V938.5h1V938.5h1V939.0h1V939.0h1V937.5h1V938.5h1V937.0h1V936.5h1V937.0h1V937.0h1V935.0h1V938.0h1V936.5h1V936.5h1V938.0h1V938.5h1V937.5h1V938.0h1V938.5h1V939.0h1V938.0h1V938.0h1V939.0h1V939.0h1V937.5h1V938.0h1V936.5h1V937.0h1V938.5h1V939.5h1V939.5h1V939.5h1V938.5h1V940.0h1V940.0h1V939.0h1V940.0h1V940.0h1V939.5h1V939.0h1V939.0h1V939.5h1V938.0h1V938.0h1V938.0h1V937.5h1V938.0h1V938.0h1V937.5h1V937.0h1V938.0h1V938.0h1V938.0h1V938.0h1V937.5h1V937.5h1V939.5h1V939.5h1V939.0h1V939.0h1V938.5h1V938.5h1V937.0h1V938.5h1V937.0h1V938.0h1V937.5h1V939.0h1V938.5h1V938.0h1V937.5h1V937.5h1V938.5h1V938.0h1V938.0h1V938.0h1V938.5h1V938.5h1V938.0h1V938.0h1V939.0h1V939.0h1V934.5h1V939.0h1V937.5h1V937.0h1V939.5h1V939.5h1V939.5h1V939.5h1V939.5h1V939.5h1V938.0h1V938.5h1V939.5h1V939.5h1V939.5h1V940.0h1V939.0h1V939.0h1V938.5h1V938.5h1V939.0h1V939.0h1V939.0h1V939.0h1V939.0h1V939.0h1V939.0h1V939.0h1V938.5h1V938.5h1V939.0h1V938.5h1V939.0h1V937.5h1V936.0h1V935.5h1V938.5h1V938.5h1V935.5h1V935.5h1V937.0h1V937.0h1V936.0h1V936.0h1V937.5h1V937.5h1V939.0h1V938.0h1V938.0h1V938.0h1V938.5h1V935.5h1V936.0h1V936.0h1V938.5h1V938.5h1V937.5h1V937.5h1V937.5h1V937.0h1V938.0h1V938.5h1V938.5h1V937.0h1V938.5h1V938.5h1V938.0h1V938.5h1V937.5h1V937.5h1V936.0h1V936.5h1V938.0h1V938.5h1V939.5h1V939.5h1V939.5h1V939.5h1V939.0h1V939.5h1V939.5h1V937.5h1V938.0h1V939.5h1V939.0h1V939.0h1V939.5h1V939.5h1V939.0h1V939.0h1V939.0h1V939.0h1V940.0h1V940.0h1V938.0h1V936.5h1V939.5h1V939.5h1V939.5h1V939.5h1V937.0h1V938.5h1V935.5h1V937.0h1V939.0h1V937.0h1V937.5h1V938.0h1V938.0h1V937.5h1V937.5h1V937.5h1V939.5h1V939.5h1V938.5h1V938.5h1V938.5h1V938.5h1V939.5h1V939.5h1V938.5h1V938.5h1V939.0h1V939.0h1V938.0h1V936.0h1V937.5h1V937.5h1V937.5h1V937.5h1V939.0h1V939.0h1V939.0h1V939.0h1V937.5h1V939.5h1V939.0h1V939.5h1V939.0h1V938.0h1V939.0h1V939.0h1V940.0h1V940.0h1V939.0h1V939.0h1V938.5h1V938.5h1V939.0h1V936.5h1V938.0h1V938.5h1V938.0h1V938.0h1V938.5h1V938.5h1V936.0h1V938.0h1V938.5h1V938.5h1V937.0h1V938.5h1V937.0h1V935.0h1V937.5h1V937.0h1V939.5h1V937.5h1V940.0h1V940.0h1V939.0h1V939.5h1V938.0h1V939.5h1V940.0h1V940.0h1V939.5h1V939.5h1V938.5h1V940.5h1V939.5h1V940.0h1V938.5h1V936.0h1V938.5h1V938.5h1V939.0h1V939.0h1V937.5h1V937.0h1V939.0h1V937.5h1V937.5h1V937.5h1V936.5h1V938.0h1V935.5h1V937.5h1V936.5h1V936.5h1V938.0h1V938.5h1V939.0h1V939.5h1V937.0h1V937.5h1V938.0h1V938.0h1V939.0h1V940.0h1V940.0h1V940.0h1V938.5h1V938.5h1V939.0h1V940.0h1V939.5h1V939.5h1V940.0h1V940.0h1V939.5h1V940.0h1V939.5h1V939.5h1V940.0h1V940.0h1V939.5h1V939.5h1V939.0h1V939.0h1V938.0h1V940.0h1V939.0h1V939.0h1V939.0h1V939.0h1V939.5h1V939.5h1V938.0h1V938.0h1V939.0h1V939.0h1V939.0h1V939.0h1V939.5h1V939.5h1V939.5h1V939.5h1V938.0h1V938.0h1V938.0h1V938.0h1V939.0h1V938.5h1V937.5h1V937.5h1V937.0h1V938.0h1V937.5h1V937.5h1V938.0h1V937.5h1V938.5h1V938.5h1V937.0h1V937.0h1V938.5h1V938.5h1V936.5h1V937.0h1V937.5h1V937.0h1V939.0h1V939.0h1V938.5h1V938.0h1V938.5h1V939.0h1V939.5h1V939.5h1V938.5h1V938.5h1V939.0h1V937.5h1V939.5h1V938.5h1V938.5h1V938.5h1V940.0h1V940.0h1V938.5h1V938.5h1V938.0h1V938.5h1V938.5h1V938.5h1V939.0h1V939.0h1V936.0h1V937.5h1V938.5h1V939.0h1V937.0h1V936.5h1V937.5h1V937.0h1V937.5h1V938.0h1V936.5h1V936.5h1V937.5h1V935.0h1V937.5h1V937.5h1V936.5h1V936.5h1V935.0h1V935.0h1V936.5h1V936.5h1V937.5h1V937.5h1V938.0h1V938.0h1V935.5h1V936.0h1V937.5h1V937.0h1V938.0h1V938.0h1V938.0h1V937.0h1V938.0h1V938.0h1V938.0h1V937.5h1V937.0h1V937.0h1V936.0h1V938.0h1V938.5h1V938.5h1V938.0h1V938.5h1V940.0h1V940.0h1V939.5h1V938.5h1V939.5h1V939.5h1V940.0h1V940.0h1V939.0h1V939.0h1V938.5h1V939.5h1V939.0h1V939.0h1V939.5h1V937.0h1V939.5h1V939.5h1V940.0h1V940.0h1V939.5h1V939.5h1V940.0h1V940.0h1V940.0h1V940.0h1V939.0h1V939.0h1V939.0h1V939.0h1V939.0h1V939.0h1V940.5h1V940.5h1V939.5h1V939.5h1V938.5h1V938.5h1V939.0h1V939.0h1V940.0h1V939.0h1V940.0h1V940.0h1V940.0h1V940.0h1V938.5h1V938.0h1V937.0h1V936.0h1V935.0h1V934.0h1V935.5h1V933.0h1V933.5h1V933.5h1V935.0h1V933.0h1V935.0h1V936.0h1V937.0h1V937.5h1V938.5h1V938.5h1V938.5h1V938.0h1V936.5h1V936.0h1V935.0h1V934.5h1V936.0h1V936.5h1V937.5h1V938.0h1V936.0h1V937.0h1V939.5h1V937.0h1V938.5h1V938.0h1V938.0h1V937.0h1V937.5h1V936.5h1V935.5h1V931.0h1V935.0h1V942.5V952.5h-1V953.5h-1V948.5h-1V952.5h-1V952.5h-1V946.5h-1V946.0h-1V947.0h-1V947.0h-1V945.5h-1V946.5h-1V946.0h-1V946.5h-1V949.5h-1V950.5h-1V950.0h-1V950.5h-1V948.5h-1V949.5h-1V948.5h-1V948.0h-1V947.0h-1V946.5h-1V948.5h-1V946.0h-1V946.0h-1V946.5h-1V947.0h-1V947.5h-1V950.5h-1V952.5h-1V953.0h-1V951.5h-1V950.5h-1V951.5h-1V951.5h-1V950.5h-1V947.5h-1V946.5h-1V946.5h-1V946.0h-1V945.0h-1V945.0h-1V947.0h-1V945.0h-1V946.0h-1V946.0h-1V946.0h-1V946.0h-1V946.0h-1V948.0h-1V945.5h-1V945.5h-1V946.0h-1V946.0h-1V945.0h-1V945.0h-1V946.0h-1V946.0h-1V945.5h-1V945.5h-1V947.5h-1V946.0h-1V945.0h-1V945.0h-1V945.5h-1V945.5h-1V945.0h-1V947.0h-1V945.0h-1V945.0h-1V945.5h-1V945.5h-1V945.5h-1V945.5h-1V945.0h-1V945.0h-1V945.0h-1V945.0h-1V947.0h-1V945.5h-1V946.0h-1V946.0h-1V946.5h-1V946.5h-1V945.5h-1V945.5h-1V946.5h-1V946.5h-1V945.5h-1V946.0h-1V946.5h-1V946.5h-1V946.0h-1V946.0h-1V948.5h-1V946.5h-1V949.5h-1V948.5h-1V948.5h-1V947.0h-1V948.5h-1V948.5h-1V948.0h-1V949.5h-1V950.0h-1V950.0h-1V950.0h-1V950.0h-1V948.5h-1V948.5h-1V950.5h-1V950.5h-1V948.5h-1V948.5h-1V950.0h-1V948.0h-1V949.5h-1V949.5h-1V948.5h-1V948.5h-1V947.5h-1V947.5h-1V946.5h-1V948.5h-1V948.5h-1V948.0h-1V946.0h-1V948.5h-1V947.0h-1V947.0h-1V948.0h-1V948.5h-1V946.5h-1V946.5h-1V946.0h-1V946.0h-1V945.5h-1V946.5h-1V946.0h-1V945.5h-1V945.5h-1V945.0h-1V945.5h-1V945.0h-1V945.0h-1V945.0h-1V945.0h-1V946.5h-1V946.0h-1V946.0h-1V946.0h-1V946.0h-1V946.5h-1V946.0h-1V948.0h-1V947.5h-1V947.0h-1V947.0h-1V946.0h-1V948.0h-1V947.0h-1V947.0h-1V947.5h-1V946.5h-1V948.5h-1V948.5h-1V946.5h-1V946.5h-1V948.5h-1V946.0h-1V948.5h-1V948.5h-1V948.0h-1V949.0h-1V947.0h-1V946.5h-1V946.0h-1V946.0h-1V946.0h-1V946.0h-1V947.0h-1V947.0h-1V946.0h-1V946.0h-1V946.0h-1V948.0h-1V946.0h-1V946.0h-1V945.0h-1V945.0h-1V945.0h-1V947.5h-1V945.0h-1V945.0h-1V946.0h-1V946.0h-1V946.0h-1V946.0h-1V945.0h-1V944.5h-1V945.0h-1V945.0h-1V945.5h-1V945.5h-1V945.5h-1V945.5h-1V945.0h-1V945.0h-1V945.0h-1V945.0h-1V945.5h-1V945.5h-1V945.5h-1V945.5h-1V945.5h-1V946.5h-1V945.5h-1V946.0h-1V945.5h-1V945.5h-1V946.5h-1V947.5h-1V946.5h-1V946.5h-1V947.0h-1V947.0h-1V947.0h-1V946.0h-1V946.0h-1V946.5h-1V946.5h-1V946.5h-1V949.5h-1V948.5h-1V947.0h-1V947.5h-1V951.5h-1V949.0h-1V946.0h-1V947.5h-1V948.0h-1V948.0h-1V945.5h-1V945.0h-1V946.0h-1V946.0h-1V945.0h-1V945.0h-1V946.0h-1V945.5h-1V945.0h-1V945.0h-1V944.5h-1V944.5h-1V945.0h-1V945.0h-1V946.0h-1V946.0h-1V945.0h-1V945.0h-1V945.5h-1V945.5h-1V946.0h-1V946.0h-1V947.5h-1V947.5h-1V947.0h-1V949.0h-1V946.0h-1V946.5h-1V946.0h-1V946.0h-1V946.5h-1V946.0h-1V947.0h-1V947.0h-1V945.5h-1V945.5h-1V945.0h-1V947.0h-1V946.0h-1V945.0h-1V947.0h-1V946.5h-1V945.0h-1V945.0h-1V946.5h-1V946.5h-1V946.5h-1V946.5h-1V946.0h-1V946.0h-1V945.0h-1V945.5h-1V946.0h-1V947.0h-1V945.5h-1V945.5h-1V947.5h-1V948.0h-1V948.5h-1V947.0h-1V946.5h-1V949.0h-1V947.5h-1V947.5h-1V945.5h-1V947.5h-1V945.5h-1V945.5h-1V946.0h-1V945.0h-1V947.0h-1V947.0h-1V946.5h-1V946.5h-1V945.5h-1V945.5h-1V947.0h-1V947.0h-1V947.5h-1V945.5h-1V947.5h-1V947.5h-1V948.0h-1V947.5h-1V947.5h-1V946.0h-1V947.0h-1V948.0h-1V946.0h-1V946.0h-1V947.5h-1V947.5h-1V947.0h-1V947.0h-1V945.5h-1V945.5h-1V945.5h-1V945.0h-1V946.0h-1V947.5h-1V948.0h-1V945.5h-1V945.5h-1V945.5h-1V945.5h-1V946.0h-1V945.5h-1V945.0h-1V946.0h-1V948.5h-1V945.5h-1V946.0h-1V946.0h-1V946.0h-1V948.0h-1V948.0h-1V946.0h-1V946.5h-1V948.5h-1V948.5h-1V947.0h-1V947.0h-1V946.5h-1V946.5h-1V949.0h-1V947.5h-1V947.5h-1V946.5h-1V947.5h-1V947.5h-1V947.0h-1V947.0h-1V946.5h-1V946.5h-1V949.5h-1V949.5h-1V949.0h-1V946.5h-1V947.5h-1V947.5h-1V948.5h-1V947.5h-1V948.0h-1V948.0h-1V946.5h-1V947.5h-1V947.5h-1V947.5h-1V948.5h-1V948.5h-1V946.5h-1V946.5h-1V949.0h-1V949.0h-1V947.0h-1V947.5h-1V946.0h-1V947.5h-1V947.0h-1V947.0h-1V947.5h-1V946.0h-1V946.0h-1V946.0h-1V947.5h-1V947.0h-1V946.5h-1V946.5h-1V946.0h-1V946.0h-1V945.5h-1V945.5h-1V945.0h-1V946.0h-1V946.0h-1V946.0h-1V945.0h-1V945.0h-1V947.5h-1V947.5h-1V946.5h-1V946.5h-1V945.5h-1V945.5h-1V946.5h-1V946.0h-1V948.0h-1V946.0h-1V947.0h-1V947.0h-1V946.0h-1V947.0h-1V947.0h-1V947.0h-1V946.0h-1V946.0h-1V946.5h-1V947.5h-1V948.0h-1V948.0h-1V946.0h-1V946.0h-1V945.5h-1V946.0h-1V948.0h-1V949.5h-1V946.0h-1V946.0h-1V946.0h-1V946.0h-1V946.5h-1V946.5h-1V946.0h-1V946.0h-1V947.0h-1V946.0h-1V946.0h-1V946.0h-1V946.0h-1V946.0h-1V948.0h-1V948.0h-1V947.5h-1V947.5h-1V945.5h-1V945.5h-1V945.0h-1V945.0h-1V946.0h-1V945.5h-1V947.5h-1V945.5h-1V945.5h-1V945.0h-1V945.0h-1V945.0h-1V945.0h-1V945.0h-1V945.5h-1V945.5h-1V947.0h-1V946.5h-1V946.5h-1V946.5h-1V947.5h-1V946.5h-1V946.5h-1V946.5h-1V948.5h-1V949.0h-1V947.5h-1V948.0h-1V947.0h-1V947.0h-1V947.0h-1V947.0h-1V947.0h-1V947.0h-1V949.5h-1V949.0h-1V950.0h-1V950.0h-1V950.0h-1V949.5h-1V947.0h-1V949.0h-1V946.5h-1V946.0h-1V946.5h-1V946.5h-1V946.0h-1V945.5h-1V945.5h-1V947.5h-1V946.5h-1V946.5h-1V946.5h-1V946.5h-1V946.0h-1V946.0h-1V947.0h-1V947.0h-1V946.0h-1V946.0h-1V948.5h-1V947.0h-1V948.5h-1V948.0h-1V948.5h-1V948.5h-1V946.5h-1V946.0h-1V946.5h-1V946.5h-1V947.0h-1V945.5h-1V945.5h-1V945.5h-1V947.0h-1V946.0h-1V945.5h-1V945.5h-1V945.5h-1V945.5h-1V946.0h-1V946.0h-1V945.0h-1V945.0h-1V946.0h-1V946.0h-1V946.5h-1V946.5h-1V947.0h-1V947.5h-1V947.0h-1V947.0h-1V946.5h-1V946.5h-1V947.5h-1V947.5h-1V948.5h-1V948.5h-1V946.5h-1V946.5h-1V946.5h-1V946.5h-1V947.5h-1V949.0h-1V947.0h-1V947.0h-1V947.5h-1V948.0h-1V948.0h-1V948.0h-1V948.0h-1V947.0h-1V948.0h-1V948.0h-1V946.5h-1V947.5h-1V948.0h-1V948.5h-1V947.5h-1V947.5h-1V947.5h-1V948.5h-1V948.0h-1V948.0h-1V950.0h-1V950.0h-1V949.0h-1V949.0h-1V949.0h-1V949.0h-1V948.5h-1V948.5h-1V949.0h-1V949.0h-1V947.0h-1V947.0h-1V949.0h-1V949.0h-1V947.0h-1V946.5h-1V947.5h-1V947.5h-1V946.0h-1V946.0h-1V946.5h-1V946.5h-1V945.5h-1V945.5h-1V946.0h-1V946.0h-1V946.0h-1V946.0h-1V946.0h-1V946.0h-1V945.5h-1V946.0h-1V947.5h-1V947.5h-1V946.5h-1V947.0h-1V946.5h-1V946.5h-1V946.5h-1V947.0h-1V947.0h-1V946.0h-1V950.0h-1V948.0h-1V946.5h-1V946.5h-1V947.5h-1V948.5h-1V947.0h-1V945.5h-1V946.5h-1V946.5h-1V946.0h-1V946.0h-1V948.0h-1V948.0h-1V946.5h-1V946.5h-1V946.5h-1V946.5h-1V948.5h-1V948.5h-1V948.5h-1V946.0h-1V946.5h-1V946.5h-1V946.5h-1V946.5h-1V946.5h-1V947.0h-1V946.5h-1V946.5h-1V946.0h-1V946.0h-1V946.0h-1V945.5h-1V948.0h-1V948.0h-1V947.5h-1V949.0h-1V945.5h-1V945.5h-1V946.0h-1V946.0h-1V944.5h-1V944.5h-1V944.5h-1V944.5h-1V945.5h-1V945.5h-1V946.5h-1V946.5h-1V945.0h-1V945.0h-1V946.0h-1V948.5h-1V946.0h-1V946.0h-1V945.0h-1V945.0h-1V944.5h-1V944.5h-1V946.5h-1V946.5h-1V945.0h-1V945.0h-1V945.0h-1V946.5h-1V945.0h-1V947.0h-1V946.5h-1V946.5h-1V944.5h-1V944.5h-1V945.0h-1V945.0h-1V945.0h-1V945.0h-1V945.0h-1V946.0h-1V946.0h-1V946.0h-1V947.0h-1V945.5h-1V945.0h-1V945.0h-1V946.0h-1V945.0h-1V944.5h-1V944.5h-1V945.5h-1V946.5h-1V945.5h-1V948.5h-1V946.5h-1V945.5h-1V945.0h-1V945.0h-1V945.5h-1V945.5h-1V947.0h-1V945.0h-1V945.0h-1V945.0h-1V945.0h-1V944.5h-1V945.0h-1V945.0h-1V946.5h-1V946.5h-1V945.0h-1V945.5h-1V945.5h-1V945.5h-1V946.5h-1V947.5h-1V946.5h-1V946.5h-1V945.5h-1V945.5h-1V945.5h-1V946.0h-1V945.0h-1V945.0h-1V945.0h-1V947.0h-1V947.0h-1V947.0h-1V946.0h-1V946.5h-1V948.5h-1V948.5h-1V946.5h-1V946.5h-1V949.5h-1V947.5h-1V947.0h-1V947.0h-1V945.5h-1V945.5h-1V946.0h-1V946.0h-1V946.0h-1V945.5h-1V945.5h-1V945.5h-1V945.5h-1V945.5h-1V945.0h-1V945.0h-1V946.0h-1V946.0h-1V945.0h-1V945.0h-1V945.0h-1V945.0h-1V945.5h-1V945.5h-1V946.0h-1V946.0h-1V946.5h-1V948.0h-1V947.0h-1V947.0h-1V947.5h-1V947.0h-1V947.0h-1V947.0h-1V947.5h-1V946.0h-1V948.5h-1V948.5h-1V947.0h-1V947.0h-1V946.5h-1V946.5h-1V946.5h-1V946.0h-1V946.0h-1V945.5h-1V947.0h-1V947.0h-1V946.0h-1V947.0h-1V946.0h-1V945.5h-1V945.0h-1V945.0h-1V945.5h-1V945.5h-1V945.5h-1V945.5h-1V945.0h-1V945.0h-1V946.0h-1V947.0h-1V945.0h-1V945.5h-1V946.5h-1V945.5h-1V949.0h-1V947.5h-1V946.0h-1V946.0h-1V946.0h-1V946.0h-1V946.0h-1V947.0h-1V945.0h-1V945.0h-1V945.5h-1V947.0h-1V946.0h-1V946.0h-1V946.5h-1V946.5h-1V945.5h-1V945.5h-1V948.5h-1V946.5h-1V948.0h-1V947.0h-1V946.5h-1V946.5h-1V948.0h-1V948.0h-1V948.5h-1V948.5h-1V948.5h-1V946.5h-1V946.5h-1V948.5h-1V947.5h-1V948.5h-1V949.5h-1V949.5h-1V946.5h-1V946.5h-1V949.5h-1V946.5h-1V948.0h-1V948.0h-1V948.0h-1V948.0h-1V946.5h-1V946.5h-1V947.5h-1V946.0h-1V946.0h-1V947.5h-1V945.0h-1V945.0h-1V945.5h-1V945.5h-1V946.0h-1V946.0h-1V946.0h-1V945.0h-1V945.0h-1V946.5h-1V945.0h-1V945.0h-1V945.0h-1V945.0h-1V946.0h-1V945.0h-1V945.0h-1V945.0h-1V945.0h-1V945.0h-1V945.0h-1V945.0h-1V945.0h-1V945.0h-1V945.0h-1V945.0h-1V945.0h-1V946.0h-1V945.0h-1V945.0h-1V945.0h-1V945.0h-1V945.5h-1V946.5h-1V945.0h-1V946.0h-1V946.0h-1V945.0h-1V946.0h-1V946.5h-1V945.0h-1V945.0h-1V947.0h-1V947.0h-1V945.5h-1V945.5h-1V945.5h-1V945.5h-1V947.5h-1V947.5h-1V945.5h-1V945.5h-1V947.0h-1V947.0h-1V947.5h-1V947.5h-1V946.0h-1V946.0h-1V945.5h-1V945.0h-1V946.5h-1V944.5h-1V945.5h-1V945.5h-1V946.0h-1V945.5h-1V944.5h-1V944.5h-1V946.0h-1V946.0h-1V945.0h-1V945.0h-1V944.5h-1V944.5h-1V944.5h-1V944.5h-1V944.5h-1V944.5h-1V946.0h-1V946.0h-1V945.0h-1V945.0h-1V946.0h-1V945.0h-1V947.0h-1V945.0h-1V946.0h-1V945.0h-1V946.0h-1V946.0h-1V945.5h-1V945.5h-1V944.5h-1V944.5h-1V945.0h-1V944.5h-1V947.0h-1V945.5h-1V946.0h-1V944.5h-1V944.5h-1V944.5h-1V945.5h-1V945.5h-1V945.0h-1V945.5h-1V946.0h-1V947.0h-1V945.5h-1V945.5h-1V947.5h-1V947.5h-1V947.0h-1V947.0h-1V946.5h-1V948.0h-1V948.5h-1V948.5h-1V946.0h-1V947.0h-1V946.0h-1V947.5h-1V947.5h-1V947.5h-1V947.0h-1V947.0h-1V946.5h-1V945.5h-1V947.0h-1V947.0h-1V946.0h-1V946.0h-1V945.5h-1V945.5h-1V947.5h-1V947.5h-1V946.5h-1V947.0h-1V946.5h-1V946.5h-1V946.5h-1V946.5h-1V946.5h-1V946.0h-1V946.5h-1V949.0h-1V946.5h-1V946.5h-1V946.0h-1V946.0h-1V946.0h-1V948.0h-1V946.0h-1V946.0h-1V946.0h-1V946.0h-1V947.0h-1V947.0h-1V947.0h-1V947.0h-1V946.0h-1V946.0h-1V946.0h-1V946.0h-1V946.5h-1V947.5h-1V947.0h-1V947.0h-1V947.5h-1V949.5h-1V947.0h-1V947.0h-1V946.5h-1V946.5h-1V947.0h-1V947.5h-1V948.0h-1V947.5h-1V949.0h-1V946.5h-1V948.0h-1V947.0h-1V950.5h-1V950.5h-1V947.5h-1V949.5h-1V948.0h-1V948.0h-1V949.0h-1V948.5h-1V947.5h-1V947.5h-1V947.5h-1V947.5h-1V949.0h-1V949.0h-1V947.5h-1V947.5h-1V947.0h-1V949.0h-1V950.5h-1V950.5h-1V947.0h-1V947.0h-1V949.5h-1V947.0h-1V950.5h-1V949.0h-1V946.5h-1V946.5h-1V946.5h-1V946.5h-1V947.5h-1V947.5h-1V948.5h-1V947.0h-1V947.5h-1V947.5h-1V947.0h-1V947.0h-1V946.0h-1V947.5h-1V947.5h-1V947.0h-1V945.5h-1V948.0h-1V946.5h-1V946.5h-1V945.5h-1V945.5h-1V945.5h-1V945.5h-1V946.5h-1V946.5h-1V945.0h-1V945.0h-1V946.0h-1V946.0h-1V946.0h-1V947.0h-1V947.0h-1V947.0h-1V946.0h-1V946.0h-1V947.0h-1V947.0h-1V947.5h-1V946.5h-1V948.0h-1V948.0h-1V946.0h-1V946.0h-1V946.5h-1V946.5h-1V946.5h-1V946.0h-1V946.5h-1V946.5h-1V946.5h-1V949.0h-1V945.5h-1V945.5h-1V946.0h-1V946.0h-1V946.0h-1V947.0h-1V946.5h-1V946.5h-1V945.0h-1V945.5h-1V946.0h-1V946.0h-1V946.0h-1V946.0h-1V946.0h-1V946.0h-1V945.0h-1V945.0h-1V946.0h-1V946.0h-1V945.0h-1V945.0h-1V945.5h-1V945.5h-1V946.5h-1V945.5h-1V945.5h-1V945.5h-1V945.0h-1V945.0h-1V945.0h-1V945.0h-1V945.5h-1V945.5h-1V945.5h-1V945.5h-1V945.5h-1V945.0h-1V944.5h-1V946.5h-1V945.5h-1V945.5h-1V945.0h-1V945.0h-1V945.5h-1V945.5h-1V945.5h-1V945.5h-1V945.0h-1V945.5h-1V946.0h-1V945.5h-1V945.0h-1V945.5h-1V945.0h-1V946.0h-1V945.0h-1V946.5h-1V947.0h-1V947.0h-1V946.5h-1V946.5h-1V947.0h-1V950.0h-1V945.0h-1V945.5h-1V946.5h-1V946.5h-1V945.0h-1V945.0h-1V945.0h-1V945.0h-1V946.0h-1V946.0h-1V944.5h-1V944.5h-1V946.0h-1V945.0h-1V944.5h-1V946.0h-1V945.5h-1V946.0h-1V945.5h-1V946.0h-1V946.5h-1V945.0h-1V946.0h-1V943.0h-1V943.0h-1V943.0h-1V943.0h-1V943.0h-1V943.0h-1V943.0h-1V943.0h-1V943.0h-1V943.0h-1V943.0h-1V943.0h-1V943.0h-1V943.0h-1V943.0h-1V943.0h-1V943.0h-1V943.0h-1V943.0h-1V943.0h-1V943.0h-1V943.0h-1V943.0h-1V943.0h-1V943.0h-1V943.0h-1V943.0h-1V943.0h-1V943.0h-1z" fill="#3d3d3d"/></svg><div class="t" style="left:577.5px;top:846.5px;letter-spacing:-0.15px">P1270472.MP4</div><div class="a" style="left:578px;top:863px;width:90px;height:1px;background:#fff"></div><div class="t" style="left:577.5px;top:907.5px;letter-spacing:-0.15px">P1270472.MP4</div><div class="a" style="left:578px;top:924px;width:90px;height:1px;background:#fff"></div><svg class="a" style="left:570px;top:740px" width="20" height="30" viewBox="570 740 20 30"><path d="M576 745h6v12l-6 6z" fill="#ff0000"/></svg><div class="a" style="left:577px;top:768px;width:1px;height:261px;background:#ff0000"></div><div class="t" style="left:434px;top:861.5px">Video 1</div><div class="t" style="left:434px;top:921.5px">Audio 1</div><div class="btn" style="left:531px;top:859px;width:20px;height:20px"><i></i><div class="t" style="left:0;width:18px;text-align:center;top:1.5px">M</div></div><div class="btn" style="left:551px;top:859px;width:20px;height:20px"><i></i><div class="t" style="left:0;width:18px;text-align:center;top:1.5px">L</div></div><div class="btn" style="left:531px;top:919px;width:20px;height:20px"><i></i><div class="t" style="left:0;width:18px;text-align:center;top:1.5px">M</div></div><div class="btn" style="left:551px;top:919px;width:20px;height:20px"><i></i><div class="t" style="left:0;width:18px;text-align:center;top:1.5px">L</div></div><div class="a" style="left:1836px;top:768px;width:13px;height:128px;background:#3a3a3a"></div><div class="sbb" style="left:1836px;top:768px;width:13px;height:13px"></div><div class="sbb" style="left:1836px;top:883px;width:13px;height:13px"></div><div class="sb" style="left:1836px;top:782px;width:13px;height:100px;background:#444"></div><svg class="a" style="left:1836px;top:768px" width="13" height="13"><path d="M2.300 8.200h8.400l-4.200-4.400z" fill="#c8c8c8"/></svg><svg class="a" style="left:1836px;top:883px" width="13" height="13"><path d="M2.300 4.600h8.400l-4.200 4.400z" fill="#c8c8c8"/></svg><div class="a" style="left:1836px;top:902px;width:13px;height:127px;background:#3a3a3a"></div><div class="sbb" style="left:1836px;top:902px;width:13px;height:13px"></div><div class="sbb" style="left:1836px;top:1016px;width:13px;height:13px"></div><div class="sb" style="left:1836px;top:916px;width:13px;height:99px;background:#444"></div><svg class="a" style="left:1836px;top:902px" width="13" height="13"><path d="M2.300 8.200h8.400l-4.200-4.400z" fill="#c8c8c8"/></svg><svg class="a" style="left:1836px;top:1016px" width="13" height="13"><path d="M2.300 4.600h8.400l-4.200 4.400z" fill="#c8c8c8"/></svg><div class="a" style="left:446px;top:1031px;width:1391px;height:13px;background:#3c3c3c"></div><div class="sbb" style="left:433px;top:1031px;width:13px;height:13px"></div><div class="sbb" style="left:1837px;top:1031px;width:13px;height:13px"></div><div class="sb" style="left:447px;top:1031px;width:956px;height:13px;background:#444;border-color:#666"></div><svg class="a" style="left:433px;top:1031px" width="13" height="13"><path d="M8.200 2.500v8l-4.400-4z" fill="#c8c8c8"/></svg><svg class="a" style="left:1837px;top:1031px" width="13" height="13"><path d="M4.800 2.500v8l4.400-4z" fill="#c8c8c8"/></svg><svg class="a" style="left:574px;top:825px" width="2" height="18" shape-rendering="crispEdges"><rect x="0" y="0" width="2" height="2" fill="#9c9a97"/><rect x="0" y="3" width="2" height="2" fill="#9c9a97"/><rect x="0" y="6" width="2" height="2" fill="#9c9a97"/><rect x="0" y="9" width="2" height="2" fill="#9c9a97"/><rect x="0" y="12" width="2" height="2" fill="#9c9a97"/><rect x="0" y="15" width="2" height="2" fill="#9c9a97"/></svg><svg class="a" style="left:574px;top:959px" width="2" height="18" shape-rendering="crispEdges"><rect x="0" y="0" width="2" height="2" fill="#9c9a97"/><rect x="0" y="3" width="2" height="2" fill="#9c9a97"/><rect x="0" y="6" width="2" height="2" fill="#9c9a97"/><rect x="0" y="9" width="2" height="2" fill="#9c9a97"/><rect x="0" y="12" width="2" height="2" fill="#9c9a97"/><rect x="0" y="15" width="2" height="2" fill="#9c9a97"/></svg><svg class="a" style="left:1858px;top:860px" width="2" height="18" shape-rendering="crispEdges"><rect x="0" y="0" width="2" height="2" fill="#9c9a97"/><rect x="0" y="3" width="2" height="2" fill="#9c9a97"/><rect x="0" y="6" width="2" height="2" fill="#9c9a97"/><rect x="0" y="9" width="2" height="2" fill="#9c9a97"/><rect x="0" y="12" width="2" height="2" fill="#9c9a97"/><rect x="0" y="15" width="2" height="2" fill="#9c9a97"/></svg><svg class="a" style="left:1135px;top:898px" width="18" height="2" shape-rendering="crispEdges"><rect y="0" x="0" width="2" height="2" fill="#9c9a97"/><rect y="0" x="3" width="2" height="2" fill="#9c9a97"/><rect y="0" x="6" width="2" height="2" fill="#9c9a97"/><rect y="0" x="9" width="2" height="2" fill="#9c9a97"/><rect y="0" x="12" width="2" height="2" fill="#9c9a97"/><rect y="0" x="15" width="2" height="2" fill="#9c9a97"/></svg><div class="t " style="left:1865px;top:686.5px;">A...</div><svg class="di" style="left:1893px;top:688px" viewBox="0 0 11 11"><path d="M1.8 .5h7.4l1.3 1.3v7.4l-1.3 1.3h-7.4l-1.300-1.300v-7.400z" fill="none" stroke="#8d8983" stroke-width="1"/><path d="M4.5 4.5v-2h4v4h-2" fill="none" stroke="#8d8983"/><rect x="2.5" y="4.5" width="4" height="4" fill="none" stroke="#8d8983"/></svg><svg class="di" style="left:1907px;top:688px" viewBox="0 0 11 11"><path d="M1.8 .5h7.4l1.3 1.3v7.4l-1.3 1.3h-7.4l-1.300-1.300v-7.400z" fill="none" stroke="#8d8983" stroke-width="1"/><path d="M2 2l7 7M9 2l-7 7" stroke="#8d8983" stroke-width="1.6"/></svg><div class="a" style="left:1861px;top:704px;width:59px;height:345px;background:#000"></div></body></html>
